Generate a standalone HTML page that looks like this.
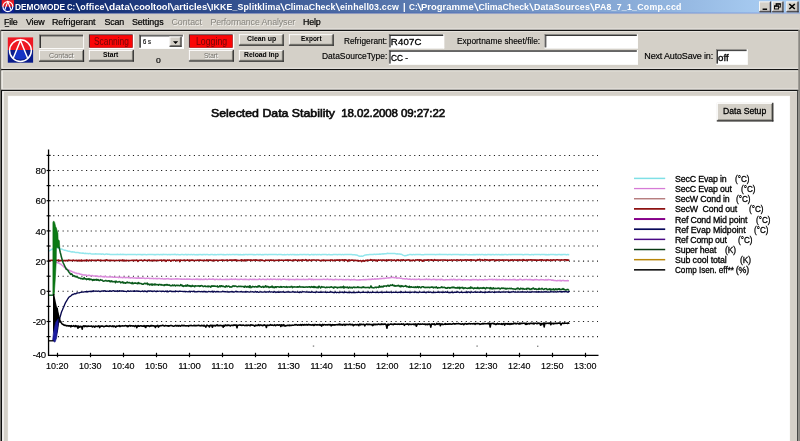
<!DOCTYPE html>
<html><head><meta charset="utf-8"><title>ClimaCheck</title>
<style>
html,body{margin:0;padding:0;}
body{width:800px;height:441px;overflow:hidden;background:#d4d0c8;position:relative;font-family:"Liberation Sans",sans-serif;}
.abs{position:absolute;}
.t{position:absolute;white-space:pre;display:block;}
#txt{position:absolute;left:0;top:0;width:800px;height:441px;will-change:transform;}
</style></head><body>
<svg class="abs" style="left:0;top:0" width="800" height="441" viewBox="0 0 800 441">
<defs><linearGradient id="tg" x1="0" y1="0" x2="1" y2="0">
<stop offset="0" stop-color="#0a246a"/><stop offset="0.07" stop-color="#0d286e"/><stop offset="0.95" stop-color="#a6caf0"/><stop offset="1" stop-color="#a8ccf2"/>
</linearGradient></defs>
<rect x="0.00" y="0.00" width="800.00" height="441.00" fill="#d4d0c8"/>
<rect x="0" y="0" width="800" height="13.5" fill="url(#tg)"/>
<rect x="0.00" y="12.60" width="800.00" height="0.90" fill="#2a46c0" opacity="0.35"/>
<rect x="0.00" y="13.50" width="800.00" height="0.60" fill="#b8b8d0" opacity="0.5"/>
<rect x="759.20" y="1.50" width="11.90" height="10.80" fill="#d4d0c8"/>
<rect x="759.20" y="1.50" width="11.90" height="0.81" fill="#ffffff"/>
<rect x="759.20" y="1.50" width="0.81" height="10.80" fill="#ffffff"/>
<rect x="759.97" y="10.60" width="10.28" height="0.85" fill="#8a8890"/>
<rect x="769.40" y="2.27" width="0.85" height="9.19" fill="#8a8890"/>
<rect x="759.20" y="11.32" width="11.90" height="0.98" fill="#26262e"/>
<rect x="770.12" y="1.50" width="0.98" height="10.80" fill="#26262e"/>
<rect x="771.90" y="1.50" width="11.60" height="10.80" fill="#d4d0c8"/>
<rect x="771.90" y="1.50" width="11.60" height="0.81" fill="#ffffff"/>
<rect x="771.90" y="1.50" width="0.81" height="10.80" fill="#ffffff"/>
<rect x="772.66" y="10.60" width="9.99" height="0.85" fill="#8a8890"/>
<rect x="781.80" y="2.27" width="0.85" height="9.19" fill="#8a8890"/>
<rect x="771.90" y="11.32" width="11.60" height="0.98" fill="#26262e"/>
<rect x="782.52" y="1.50" width="0.98" height="10.80" fill="#26262e"/>
<rect x="786.40" y="1.50" width="12.20" height="10.80" fill="#d4d0c8"/>
<rect x="786.40" y="1.50" width="12.20" height="0.81" fill="#ffffff"/>
<rect x="786.40" y="1.50" width="0.81" height="10.80" fill="#ffffff"/>
<rect x="787.16" y="10.60" width="10.59" height="0.85" fill="#8a8890"/>
<rect x="796.90" y="2.27" width="0.85" height="9.19" fill="#8a8890"/>
<rect x="786.40" y="11.32" width="12.20" height="0.98" fill="#26262e"/>
<rect x="797.62" y="1.50" width="0.98" height="10.80" fill="#26262e"/>
<rect x="762.6" y="8.5" width="4.5" height="1.45" fill="#000"/>
<rect x="776.2" y="3.9" width="4.1" height="3.2" fill="none" stroke="#000" stroke-width="0.9"/><rect x="775.75" y="3.4" width="5" height="1.2" fill="#000"/>
<rect x="774.5" y="6.0" width="4.1" height="3.0" fill="#d4d0c8" stroke="#000" stroke-width="0.9"/><rect x="774.05" y="5.5" width="5" height="1.2" fill="#000"/>
<path d="M789.3 4.0 L794.8 9.0 M794.8 4.0 L789.3 9.0" stroke="#000" stroke-width="1.55" fill="none"/>
<rect x="0.00" y="28.65" width="799.00" height="0.90" fill="#f3f1ed"/>
<rect x="1.00" y="29.75" width="797.70" height="1.30" fill="#141414"/>
<rect x="2.40" y="31.25" width="795.60" height="0.80" fill="#efede8"/>
<rect x="0.00" y="67.85" width="799.00" height="0.90" fill="#f3f1ed"/>
<rect x="0.80" y="68.95" width="797.90" height="1.30" fill="#141414"/>
<rect x="2.40" y="70.45" width="795.60" height="0.80" fill="#efede8"/>
<rect x="0.00" y="88.65" width="799.00" height="0.90" fill="#f3f1ed"/>
<rect x="0.80" y="89.75" width="797.90" height="1.30" fill="#141414"/>
<rect x="2.40" y="91.25" width="795.60" height="0.80" fill="#efede8"/>
<rect x="0.00" y="29.80" width="1.25" height="411.20" fill="#74726c"/>
<rect x="1.50" y="31.20" width="1.20" height="36.60" fill="#f6f4f0"/>
<rect x="1.50" y="70.60" width="1.20" height="18.20" fill="#f6f4f0"/>
<rect x="1.00" y="90.40" width="1.10" height="350.60" fill="#0c0c0c"/>
<rect x="2.25" y="91.40" width="1.45" height="349.60" fill="#fbfaf8"/>
<rect x="797.00" y="90.40" width="1.30" height="350.60" fill="#484846"/>
<rect x="798.30" y="29.80" width="1.70" height="411.20" fill="#8a8882"/>
<rect x="789.80" y="92.20" width="7.20" height="348.80" fill="#d6d0c8"/>
<rect x="7.70" y="95.70" width="782.40" height="345.30" fill="#ebe8e2"/>
<rect x="8.10" y="96.10" width="781.70" height="344.90" fill="#ffffff"/>
<g transform="translate(7.8,37.4)">
<rect x="0" y="0" width="25.3" height="12.6" fill="#ee1822"/>
<rect x="0" y="12.6" width="25.3" height="12.7" fill="#0a1c8a"/>
<path d="M8.8 12.6 L16.5 12.6 L19.4 19.8 Q12.7 24.2 5.9 19.8 Z" fill="#1432c4"/>
<circle cx="12.65" cy="13.2" r="10.9" fill="none" stroke="#fff" stroke-width="1.45"/>
<path d="M5.5 20.6 L12.65 3.0 L19.8 20.6" fill="none" stroke="#fff" stroke-width="1.45" stroke-linejoin="miter"/>
</g>
<g transform="translate(1.7,0.1) scale(0.486,0.494)">
<rect x="0" y="0" width="25.3" height="13.6" fill="#e81a24"/>
<rect x="0" y="13.6" width="25.3" height="11.7" fill="#0c1e90"/>
<circle cx="12.65" cy="13.2" r="10.2" fill="none" stroke="#fff" stroke-width="2.3"/>
<path d="M6.4 19.6 L12.65 3.2 L18.9 19.6" fill="none" stroke="#fff" stroke-width="2.2"/>
</g>
<path d="M76.15 3.3 L79.65 11.0" stroke="#fff" stroke-width="1.25" fill="none"/>
<path d="M104.90 3.3 L108.40 11.0" stroke="#fff" stroke-width="1.25" fill="none"/>
<path d="M130.00 3.3 L133.50 11.0" stroke="#fff" stroke-width="1.25" fill="none"/>
<path d="M170.25 3.3 L173.75 11.0" stroke="#fff" stroke-width="1.25" fill="none"/>
<path d="M207.25 3.3 L210.75 11.0" stroke="#fff" stroke-width="1.25" fill="none"/>
<path d="M280.75 3.3 L284.25 11.0" stroke="#fff" stroke-width="1.25" fill="none"/>
<path d="M336.00 3.3 L339.50 11.0" stroke="#fff" stroke-width="1.25" fill="none"/>
<path d="M417.75 3.3 L421.25 11.0" stroke="#fff" stroke-width="1.25" fill="none"/>
<path d="M474.50 3.3 L478.00 11.0" stroke="#fff" stroke-width="1.25" fill="none"/>
<path d="M529.75 3.3 L533.25 11.0" stroke="#fff" stroke-width="1.25" fill="none"/>
<path d="M590.55 3.3 L594.05 11.0" stroke="#fff" stroke-width="1.25" fill="none"/>
<rect x="39.30" y="34.60" width="44.80" height="14.40" fill="#d4d0c8"/>
<rect x="39.30" y="48.00" width="44.80" height="1.00" fill="#fbfaf8"/>
<rect x="83.10" y="34.60" width="1.00" height="14.40" fill="#fbfaf8"/>
<rect x="39.30" y="34.60" width="43.80" height="0.80" fill="#605e5a"/>
<rect x="39.30" y="34.60" width="0.80" height="13.40" fill="#605e5a"/>
<rect x="40.10" y="35.40" width="43.00" height="0.90" fill="#242424"/>
<rect x="40.10" y="35.40" width="0.90" height="12.60" fill="#242424"/>
<rect x="39.00" y="49.80" width="45.10" height="12.00" fill="#d4d0c8"/>
<rect x="39.00" y="49.80" width="45.10" height="0.95" fill="#ffffff"/>
<rect x="39.00" y="49.80" width="0.95" height="12.00" fill="#ffffff"/>
<rect x="39.90" y="59.80" width="43.20" height="1.00" fill="#8c8a82"/>
<rect x="82.10" y="50.70" width="1.00" height="10.10" fill="#8c8a82"/>
<rect x="39.00" y="60.65" width="45.10" height="1.15" fill="#2e2e2e"/>
<rect x="82.95" y="49.80" width="1.15" height="12.00" fill="#2e2e2e"/>
<rect x="88.90" y="34.30" width="45.30" height="14.80" fill="#ffffff"/>
<rect x="88.90" y="34.30" width="43.80" height="13.40" fill="#4a2a30"/>
<rect x="89.90" y="35.20" width="42.60" height="12.40" fill="#fb0606"/>
<rect x="88.90" y="49.90" width="45.00" height="11.70" fill="#d4d0c8"/>
<rect x="88.90" y="49.90" width="45.00" height="0.95" fill="#ffffff"/>
<rect x="88.90" y="49.90" width="0.95" height="11.70" fill="#ffffff"/>
<rect x="89.80" y="59.60" width="43.10" height="1.00" fill="#8c8a82"/>
<rect x="131.90" y="50.80" width="1.00" height="9.80" fill="#8c8a82"/>
<rect x="88.90" y="60.45" width="45.00" height="1.15" fill="#2e2e2e"/>
<rect x="132.75" y="49.90" width="1.15" height="11.70" fill="#2e2e2e"/>
<rect x="139.10" y="34.70" width="44.80" height="14.00" fill="#ffffff"/>
<rect x="139.10" y="47.70" width="44.80" height="1.00" fill="#ffffff"/>
<rect x="182.90" y="34.70" width="1.00" height="14.00" fill="#ffffff"/>
<rect x="139.10" y="34.70" width="43.80" height="0.80" fill="#605e5a"/>
<rect x="139.10" y="34.70" width="0.80" height="13.00" fill="#605e5a"/>
<rect x="139.90" y="35.50" width="43.00" height="0.90" fill="#242424"/>
<rect x="139.90" y="35.50" width="0.90" height="12.20" fill="#242424"/>
<rect x="169.50" y="36.60" width="12.10" height="10.20" fill="#d4d0c8"/>
<rect x="169.50" y="36.60" width="12.10" height="0.85" fill="#ffffff"/>
<rect x="169.50" y="36.60" width="0.85" height="10.20" fill="#ffffff"/>
<rect x="170.31" y="45.00" width="10.39" height="0.90" fill="#8c8a82"/>
<rect x="179.80" y="37.41" width="0.90" height="8.49" fill="#8c8a82"/>
<rect x="169.50" y="45.77" width="12.10" height="1.03" fill="#2e2e2e"/>
<rect x="180.56" y="36.60" width="1.03" height="10.20" fill="#2e2e2e"/>
<path d="M173.0 41.3 L178.2 41.3 L175.6 44.0 Z" fill="#000"/>
<rect x="188.90" y="34.30" width="45.30" height="14.80" fill="#ffffff"/>
<rect x="188.90" y="34.30" width="43.80" height="13.40" fill="#4a2a30"/>
<rect x="189.90" y="35.20" width="42.60" height="12.40" fill="#fb0606"/>
<rect x="188.90" y="49.90" width="45.00" height="11.70" fill="#d4d0c8"/>
<rect x="188.90" y="49.90" width="45.00" height="0.95" fill="#ffffff"/>
<rect x="188.90" y="49.90" width="0.95" height="11.70" fill="#ffffff"/>
<rect x="189.80" y="59.60" width="43.10" height="1.00" fill="#8c8a82"/>
<rect x="231.90" y="50.80" width="1.00" height="9.80" fill="#8c8a82"/>
<rect x="188.90" y="60.45" width="45.00" height="1.15" fill="#2e2e2e"/>
<rect x="232.75" y="49.90" width="1.15" height="11.70" fill="#2e2e2e"/>
<rect x="238.90" y="34.20" width="44.90" height="11.60" fill="#d4d0c8"/>
<rect x="238.90" y="34.20" width="44.90" height="0.95" fill="#ffffff"/>
<rect x="238.90" y="34.20" width="0.95" height="11.60" fill="#ffffff"/>
<rect x="239.80" y="43.80" width="43.00" height="1.00" fill="#8c8a82"/>
<rect x="281.80" y="35.10" width="1.00" height="9.70" fill="#8c8a82"/>
<rect x="238.90" y="44.65" width="44.90" height="1.15" fill="#2e2e2e"/>
<rect x="282.65" y="34.20" width="1.15" height="11.60" fill="#2e2e2e"/>
<rect x="238.90" y="50.10" width="44.90" height="11.70" fill="#d4d0c8"/>
<rect x="238.90" y="50.10" width="44.90" height="0.95" fill="#ffffff"/>
<rect x="238.90" y="50.10" width="0.95" height="11.70" fill="#ffffff"/>
<rect x="239.80" y="59.80" width="43.00" height="1.00" fill="#8c8a82"/>
<rect x="281.80" y="51.00" width="1.00" height="9.80" fill="#8c8a82"/>
<rect x="238.90" y="60.65" width="44.90" height="1.15" fill="#2e2e2e"/>
<rect x="282.65" y="50.10" width="1.15" height="11.70" fill="#2e2e2e"/>
<rect x="288.90" y="34.20" width="44.90" height="11.60" fill="#d4d0c8"/>
<rect x="288.90" y="34.20" width="44.90" height="0.95" fill="#ffffff"/>
<rect x="288.90" y="34.20" width="0.95" height="11.60" fill="#ffffff"/>
<rect x="289.80" y="43.80" width="43.00" height="1.00" fill="#8c8a82"/>
<rect x="331.80" y="35.10" width="1.00" height="9.70" fill="#8c8a82"/>
<rect x="288.90" y="44.65" width="44.90" height="1.15" fill="#2e2e2e"/>
<rect x="332.65" y="34.20" width="1.15" height="11.60" fill="#2e2e2e"/>
<rect x="388.90" y="34.30" width="55.30" height="14.10" fill="#ffffff"/>
<rect x="388.90" y="47.40" width="55.30" height="1.00" fill="#ffffff"/>
<rect x="443.20" y="34.30" width="1.00" height="14.10" fill="#ffffff"/>
<rect x="388.90" y="34.30" width="54.30" height="0.80" fill="#605e5a"/>
<rect x="388.90" y="34.30" width="0.80" height="13.10" fill="#605e5a"/>
<rect x="389.70" y="35.10" width="53.50" height="0.90" fill="#242424"/>
<rect x="389.70" y="35.10" width="0.90" height="12.30" fill="#242424"/>
<rect x="388.90" y="50.00" width="248.90" height="14.60" fill="#ffffff"/>
<rect x="388.90" y="63.60" width="248.90" height="1.00" fill="#ffffff"/>
<rect x="636.80" y="50.00" width="1.00" height="14.60" fill="#ffffff"/>
<rect x="388.90" y="50.00" width="247.90" height="0.80" fill="#605e5a"/>
<rect x="388.90" y="50.00" width="0.80" height="13.60" fill="#605e5a"/>
<rect x="389.70" y="50.80" width="247.10" height="0.90" fill="#242424"/>
<rect x="389.70" y="50.80" width="0.90" height="12.80" fill="#242424"/>
<rect x="544.60" y="34.30" width="93.20" height="14.10" fill="#ffffff"/>
<rect x="544.60" y="47.40" width="93.20" height="1.00" fill="#ffffff"/>
<rect x="636.80" y="34.30" width="1.00" height="14.10" fill="#ffffff"/>
<rect x="544.60" y="34.30" width="92.20" height="0.80" fill="#605e5a"/>
<rect x="544.60" y="34.30" width="0.80" height="13.10" fill="#605e5a"/>
<rect x="545.40" y="35.10" width="91.40" height="0.90" fill="#242424"/>
<rect x="545.40" y="35.10" width="0.90" height="12.30" fill="#242424"/>
<rect x="716.30" y="49.40" width="31.30" height="15.20" fill="#ffffff"/>
<rect x="716.30" y="63.60" width="31.30" height="1.00" fill="#ffffff"/>
<rect x="746.60" y="49.40" width="1.00" height="15.20" fill="#ffffff"/>
<rect x="716.30" y="49.40" width="30.30" height="0.80" fill="#605e5a"/>
<rect x="716.30" y="49.40" width="0.80" height="14.20" fill="#605e5a"/>
<rect x="717.10" y="50.20" width="29.50" height="0.90" fill="#242424"/>
<rect x="717.10" y="50.20" width="0.90" height="13.40" fill="#242424"/>
<rect x="716.80" y="102.80" width="56.60" height="18.70" fill="#d4d0c8"/>
<rect x="716.80" y="102.80" width="56.60" height="1.05" fill="#ffffff"/>
<rect x="716.80" y="102.80" width="1.04" height="18.70" fill="#ffffff"/>
<rect x="717.79" y="119.30" width="54.51" height="1.10" fill="#8c8a82"/>
<rect x="771.20" y="103.79" width="1.10" height="16.61" fill="#8c8a82"/>
<rect x="716.80" y="120.23" width="56.60" height="1.27" fill="#2e2e2e"/>
<rect x="772.13" y="102.80" width="1.26" height="18.70" fill="#2e2e2e"/>
<rect x="4.80" y="26.10" width="4.40" height="0.90" fill="#222"/>
<g stroke="#1c1c1c" stroke-width="1.05" stroke-dasharray="1.15 3.538" fill="none"><line x1="53.2" y1="336.60" x2="598" y2="336.60"/><line x1="53.2" y1="321.50" x2="598" y2="321.50"/><line x1="53.2" y1="306.40" x2="598" y2="306.40"/><line x1="53.2" y1="291.30" x2="598" y2="291.30"/><line x1="53.2" y1="276.20" x2="598" y2="276.20"/><line x1="53.2" y1="261.10" x2="598" y2="261.10"/><line x1="53.2" y1="246.00" x2="598" y2="246.00"/><line x1="53.2" y1="230.90" x2="598" y2="230.90"/><line x1="53.2" y1="215.80" x2="598" y2="215.80"/><line x1="53.2" y1="200.70" x2="598" y2="200.70"/><line x1="53.2" y1="185.60" x2="598" y2="185.60"/><line x1="53.2" y1="170.50" x2="598" y2="170.50"/><line x1="53.2" y1="155.40" x2="598" y2="155.40"/></g>
<path d="M48.5 251.2 L49.3 250.8 L50.1 250.3 L50.9 249.9 L51.7 249.4 L52.5 249.0 L53.3 248.7 L54.1 248.2 L54.9 247.8 L55.7 247.3 L56.5 247.3 L57.3 247.6 L58.1 247.8 L58.9 248.3 L59.7 248.6 L60.5 248.9 L61.3 249.0 L62.1 249.2 L62.9 249.6 L63.7 249.9 L64.5 250.2 L65.3 250.3 L66.1 250.6 L66.9 250.7 L67.7 251.0 L68.5 251.2 L69.3 251.2 L70.1 251.6 L70.9 251.7 L71.7 251.9 L72.5 251.8 L73.3 251.9 L74.1 252.1 L74.9 252.3 L75.7 252.4 L76.5 252.5 L77.3 252.5 L78.1 252.6 L78.9 252.7 L79.7 253.0 L80.5 252.9 L81.3 253.1 L82.1 253.2 L82.9 253.0 L83.7 253.3 L84.5 253.5 L85.3 253.2 L86.1 253.4 L86.9 253.5 L87.7 253.5 L88.5 253.7 L89.3 253.6 L90.1 253.6 L90.9 253.8 L91.7 253.9 L92.5 253.9 L93.3 254.0 L94.1 253.9 L94.9 253.9 L95.7 253.8 L96.5 254.1 L97.3 254.0 L98.1 254.0 L98.9 254.0 L99.7 254.0 L100.5 254.1 L101.3 254.3 L102.1 254.0 L102.9 254.0 L103.7 254.2 L104.5 254.4 L105.3 254.3 L106.1 254.1 L106.9 254.0 L107.7 254.3 L108.5 254.2 L109.3 254.2 L110.1 254.4 L110.9 254.5 L111.7 254.4 L112.5 254.4 L113.3 254.4 L114.1 254.6 L114.9 254.5 L115.7 254.5 L116.5 254.5 L117.3 254.3 L118.1 254.6 L118.9 254.5 L119.7 254.5 L120.5 254.3 L121.3 254.4 L122.1 254.6 L122.9 254.3 L123.7 254.5 L124.5 254.6 L125.3 254.4 L126.1 254.7 L126.9 254.6 L127.7 254.5 L128.5 254.6 L129.3 254.6 L130.1 254.5 L130.9 254.6 L131.7 254.5 L132.5 254.5 L133.3 254.6 L134.1 254.5 L134.9 254.5 L135.7 254.6 L136.5 254.7 L137.3 254.5 L138.1 254.4 L138.9 254.5 L139.7 254.5 L140.5 254.5 L141.3 254.7 L142.1 254.5 L142.9 254.7 L143.7 254.4 L144.5 254.5 L145.3 254.6 L146.1 254.7 L146.9 254.7 L147.7 254.6 L148.5 254.6 L149.3 254.6 L150.1 254.6 L150.9 254.6 L151.7 254.6 L152.5 254.6 L153.3 254.6 L154.1 254.7 L154.9 254.6 L155.7 254.8 L156.5 254.6 L157.3 254.5 L158.1 254.5 L158.9 254.6 L159.7 254.7 L160.5 254.6 L161.3 254.6 L162.1 254.8 L162.9 254.3 L163.7 254.5 L164.5 254.6 L165.3 254.6 L166.1 254.6 L166.9 254.5 L167.7 254.7 L168.5 254.6 L169.3 254.5 L170.1 254.8 L170.9 254.6 L171.7 254.5 L172.5 254.6 L173.3 254.6 L174.1 254.6 L174.9 254.3 L175.7 254.5 L176.5 254.7 L177.3 254.5 L178.1 254.6 L178.9 254.7 L179.7 254.7 L180.5 254.7 L181.3 254.4 L182.1 254.6 L182.9 254.6 L183.7 254.7 L184.5 254.7 L185.3 254.3 L186.1 254.7 L186.9 254.5 L187.7 254.7 L188.5 254.4 L189.3 254.6 L190.1 254.7 L190.9 254.6 L191.7 254.6 L192.5 254.7 L193.3 254.6 L194.1 254.6 L194.9 254.8 L195.7 254.7 L196.5 254.6 L197.3 254.9 L198.1 254.5 L198.9 254.7 L199.7 254.6 L200.5 254.6 L201.3 254.7 L202.1 254.6 L202.9 254.7 L203.7 254.4 L204.5 254.4 L205.3 254.7 L206.1 254.5 L206.9 254.5 L207.7 254.5 L208.5 254.7 L209.3 254.7 L210.1 254.7 L210.9 254.5 L211.7 254.6 L212.5 254.5 L213.3 254.7 L214.1 254.8 L214.9 254.5 L215.7 254.8 L216.5 254.7 L217.3 254.6 L218.1 254.4 L218.9 254.7 L219.7 254.6 L220.5 254.5 L221.3 254.6 L222.1 254.6 L222.9 254.7 L223.7 254.5 L224.5 254.7 L225.3 254.7 L226.1 254.7 L226.9 254.6 L227.7 254.5 L228.5 254.7 L229.3 254.6 L230.1 254.6 L230.9 254.7 L231.7 254.6 L232.5 254.4 L233.3 254.6 L234.1 254.4 L234.9 254.7 L235.7 254.6 L236.5 254.5 L237.3 254.6 L238.1 254.7 L238.9 254.6 L239.7 254.7 L240.5 254.6 L241.3 254.7 L242.1 254.7 L242.9 254.8 L243.7 254.5 L244.5 254.7 L245.3 254.4 L246.1 254.5 L246.9 254.4 L247.7 254.7 L248.5 254.5 L249.3 254.6 L250.1 254.6 L250.9 254.6 L251.7 254.5 L252.5 254.6 L253.3 254.8 L254.1 254.6 L254.9 254.7 L255.7 254.7 L256.5 254.6 L257.3 254.5 L258.1 254.5 L258.9 254.7 L259.7 254.4 L260.5 254.5 L261.3 254.7 L262.1 254.7 L262.9 254.6 L263.7 254.7 L264.5 254.6 L265.3 254.5 L266.1 254.4 L266.9 254.5 L267.7 254.7 L268.5 254.5 L269.3 254.5 L270.1 254.5 L270.9 254.4 L271.7 254.6 L272.5 254.5 L273.3 254.6 L274.1 254.4 L274.9 254.6 L275.7 254.5 L276.5 254.4 L277.3 254.7 L278.1 254.6 L278.9 254.4 L279.7 254.5 L280.5 254.6 L281.3 254.6 L282.1 254.7 L282.9 254.7 L283.7 254.7 L284.5 254.6 L285.3 254.7 L286.1 254.7 L286.9 254.6 L287.7 254.4 L288.5 254.7 L289.3 254.7 L290.1 254.6 L290.9 254.6 L291.7 254.8 L292.5 254.4 L293.3 254.6 L294.1 254.8 L294.9 254.5 L295.7 254.7 L296.5 254.8 L297.3 254.6 L298.1 254.7 L298.9 254.7 L299.7 254.5 L300.5 254.6 L301.3 254.6 L302.1 254.7 L302.9 254.6 L303.7 254.6 L304.5 254.5 L305.3 254.6 L306.1 254.7 L306.9 254.6 L307.7 254.5 L308.5 254.5 L309.3 254.9 L310.1 254.7 L310.9 254.7 L311.7 254.3 L312.5 254.7 L313.3 254.6 L314.1 254.8 L314.9 254.6 L315.7 254.6 L316.5 254.7 L317.3 254.4 L318.1 254.7 L318.9 254.6 L319.7 254.5 L320.5 254.7 L321.3 254.8 L322.1 254.5 L322.9 254.5 L323.7 254.6 L324.5 254.6 L325.3 254.6 L326.1 254.5 L326.9 254.8 L327.7 254.7 L328.5 254.5 L329.3 254.5 L330.1 254.8 L330.9 254.7 L331.7 254.8 L332.5 254.7 L333.3 254.5 L334.1 254.6 L334.9 254.4 L335.7 254.5 L336.5 254.6 L337.3 254.7 L338.1 254.5 L338.9 254.6 L339.7 254.6 L340.5 254.6 L341.3 254.7 L342.1 254.6 L342.9 254.6 L343.7 254.7 L344.5 254.6 L345.3 254.5 L346.1 254.5 L346.9 254.6 L347.7 254.6 L348.5 254.6 L349.3 254.6 L350.1 254.6 L350.9 254.6 L351.7 254.5 L352.5 254.7 L353.3 254.7 L354.1 254.7 L354.9 254.8 L355.7 255.0 L356.5 255.0 L357.3 255.2 L358.1 255.7 L358.9 255.9 L359.7 256.3 L360.5 256.3 L361.3 256.1 L362.1 256.2 L362.9 256.2 L363.7 255.7 L364.5 255.3 L365.3 255.1 L366.1 255.0 L366.9 254.8 L367.7 254.7 L368.5 254.7 L369.3 254.6 L370.1 254.5 L370.9 254.5 L371.7 254.6 L372.5 254.5 L373.3 254.5 L374.1 254.3 L374.9 254.3 L375.7 254.4 L376.5 254.2 L377.3 254.3 L378.1 254.2 L378.9 254.2 L379.7 254.0 L380.5 254.3 L381.3 254.1 L382.1 253.9 L382.9 253.8 L383.7 254.0 L384.5 253.7 L385.3 253.7 L386.1 253.7 L386.9 253.5 L387.7 253.3 L388.5 253.4 L389.3 253.4 L390.1 253.5 L390.9 253.4 L391.7 253.4 L392.5 253.5 L393.3 253.5 L394.1 253.5 L394.9 253.6 L395.7 253.7 L396.5 253.9 L397.3 253.8 L398.1 253.9 L398.9 254.1 L399.7 254.0 L400.5 254.3 L401.3 254.3 L402.1 254.6 L402.9 255.1 L403.7 255.4 L404.5 255.7 L405.3 255.7 L406.1 255.4 L406.9 255.4 L407.7 255.0 L408.5 254.9 L409.3 254.6 L410.1 254.6 L410.9 254.4 L411.7 254.7 L412.5 254.7 L413.3 254.4 L414.1 254.6 L414.9 254.7 L415.7 254.4 L416.5 254.4 L417.3 254.5 L418.1 254.5 L418.9 254.5 L419.7 254.6 L420.5 254.6 L421.3 254.7 L422.1 254.7 L422.9 254.8 L423.7 254.7 L424.5 254.5 L425.3 254.5 L426.1 254.5 L426.9 254.5 L427.7 254.6 L428.5 254.6 L429.3 254.6 L430.1 254.4 L430.9 254.5 L431.7 254.6 L432.5 254.6 L433.3 254.6 L434.1 254.6 L434.9 254.5 L435.7 254.7 L436.5 254.6 L437.3 254.6 L438.1 254.5 L438.9 254.6 L439.7 254.3 L440.5 254.5 L441.3 254.6 L442.1 254.4 L442.9 254.6 L443.7 254.6 L444.5 254.5 L445.3 254.6 L446.1 254.6 L446.9 254.6 L447.7 254.7 L448.5 254.6 L449.3 254.5 L450.1 254.6 L450.9 254.6 L451.7 254.7 L452.5 254.6 L453.3 254.5 L454.1 254.5 L454.9 254.6 L455.7 254.5 L456.5 254.5 L457.3 254.6 L458.1 254.6 L458.9 254.6 L459.7 254.7 L460.5 254.6 L461.3 254.8 L462.1 254.6 L462.9 254.7 L463.7 254.6 L464.5 254.7 L465.3 254.4 L466.1 254.5 L466.9 254.6 L467.7 254.7 L468.5 254.8 L469.3 254.6 L470.1 254.7 L470.9 254.7 L471.7 254.7 L472.5 254.7 L473.3 254.6 L474.1 254.7 L474.9 254.5 L475.7 254.7 L476.5 254.5 L477.3 254.6 L478.1 254.8 L478.9 254.6 L479.7 254.6 L480.5 254.7 L481.3 254.6 L482.1 254.5 L482.9 254.6 L483.7 254.7 L484.5 254.7 L485.3 254.5 L486.1 254.8 L486.9 254.8 L487.7 254.6 L488.5 254.6 L489.3 254.6 L490.1 254.7 L490.9 254.5 L491.7 254.7 L492.5 254.6 L493.3 254.5 L494.1 254.7 L494.9 254.7 L495.7 254.6 L496.5 254.5 L497.3 254.7 L498.1 254.6 L498.9 254.6 L499.7 254.8 L500.5 254.7 L501.3 254.5 L502.1 254.8 L502.9 254.6 L503.7 254.7 L504.5 254.5 L505.3 254.6 L506.1 254.4 L506.9 254.8 L507.7 254.7 L508.5 254.5 L509.3 254.4 L510.1 254.4 L510.9 254.7 L511.7 254.6 L512.5 254.6 L513.3 254.6 L514.1 254.6 L514.9 254.5 L515.7 254.6 L516.5 254.5 L517.3 254.6 L518.1 254.6 L518.9 254.6 L519.7 254.6 L520.5 254.5 L521.3 254.6 L522.1 254.6 L522.9 254.8 L523.7 254.7 L524.5 254.6 L525.3 254.6 L526.1 254.5 L526.9 254.5 L527.7 254.6 L528.5 254.6 L529.3 254.7 L530.1 254.7 L530.9 254.8 L531.7 254.5 L532.5 254.6 L533.3 254.9 L534.1 254.4 L534.9 254.5 L535.7 254.6 L536.5 254.6 L537.3 254.6 L538.1 254.6 L538.9 254.6 L539.7 254.6 L540.5 254.7 L541.3 254.4 L542.1 254.5 L542.9 254.6 L543.7 254.5 L544.5 254.5 L545.3 254.7 L546.1 254.5 L546.9 254.7 L547.7 254.7 L548.5 254.6 L549.3 254.7 L550.1 254.6 L550.9 254.5 L551.7 254.6 L552.5 254.6 L553.3 254.5 L554.1 254.6 L554.9 254.7 L555.7 254.5 L556.5 254.7 L557.3 254.8 L558.1 254.5 L558.9 254.6 L559.7 254.6 L560.5 254.8 L561.3 254.6 L562.1 254.7 L562.9 254.5 L563.7 254.6 L564.5 254.6 L565.3 254.4 L566.1 254.7 L566.9 254.7 L567.7 254.4 L568.5 254.7 L569.3 254.6" fill="none" stroke="#92e6ec" stroke-width="1.50" stroke-linejoin="round"/>
<path d="M49.0 260.5 L49.6 260.5 L50.2 260.7 L50.8 260.3 L51.4 260.3 L52.0 260.4 L52.6 260.2 L53.2 260.4 L53.8 260.5 L54.4 260.4 L55.0 260.3 L55.6 260.2 L56.2 260.3 L56.8 260.6 L57.4 260.4 L58.0 260.1 L58.6 260.0 L59.2 260.4 L59.8 261.0 L60.4 260.6 L61.0 260.4 L61.6 260.4 L62.2 260.7 L62.8 260.6 L63.4 260.4 L64.0 260.5 L64.6 260.8 L65.2 260.5 L65.8 260.9 L66.4 260.4 L67.0 260.5 L67.6 260.6 L68.2 260.3 L68.8 260.1 L69.4 260.5 L70.0 260.3 L70.6 260.5 L71.2 260.5 L71.8 260.4 L72.4 260.6 L73.0 260.1 L73.6 260.3 L74.2 260.5 L74.8 260.7 L75.4 260.4 L76.0 260.6 L76.6 260.3 L77.2 260.6 L77.8 260.5 L78.4 260.3 L79.0 261.1 L79.6 260.2 L80.2 260.4 L80.8 261.0 L81.4 260.0 L82.0 260.8 L82.6 260.4 L83.2 260.4 L83.8 260.7 L84.4 260.3 L85.0 260.9 L85.6 260.3 L86.2 260.2 L86.8 259.9 L87.4 260.4 L88.0 260.4 L88.6 260.9 L89.2 260.2 L89.8 260.1 L90.4 260.5 L91.0 260.5 L91.6 260.0 L92.2 260.2 L92.8 260.2 L93.4 260.4 L94.0 260.3 L94.6 260.6 L95.2 260.2 L95.8 260.3 L96.4 260.5 L97.0 260.3 L97.6 260.0 L98.2 260.4 L98.8 260.1 L99.4 260.5 L100.0 260.5 L100.6 260.1 L101.2 260.3 L101.8 260.6 L102.4 260.4 L103.0 260.5 L103.6 260.6 L104.2 260.2 L104.8 260.6 L105.4 260.3 L106.0 260.0 L106.6 259.8 L107.2 260.5 L107.8 260.1 L108.4 260.5 L109.0 260.6 L109.6 260.3 L110.2 260.5 L110.8 260.2 L111.4 260.4 L112.0 260.3 L112.6 260.4 L113.2 260.6 L113.8 260.3 L114.4 260.6 L115.0 260.5 L115.6 260.4 L116.2 260.3 L116.8 260.5 L117.4 260.4 L118.0 260.4 L118.6 260.3 L119.2 260.3 L119.8 260.2 L120.4 260.4 L121.0 260.2 L121.6 260.6 L122.2 260.8 L122.8 259.8 L123.4 260.7 L124.0 260.5 L124.6 260.2 L125.2 260.5 L125.8 261.0 L126.4 260.2 L127.0 260.6 L127.6 260.5 L128.2 260.4 L128.8 260.5 L129.4 260.5 L130.0 260.5 L130.6 260.4 L131.2 260.4 L131.8 260.3 L132.4 260.3 L133.0 260.6 L133.6 260.2 L134.2 260.4 L134.8 260.2 L135.4 260.4 L136.0 260.2 L136.6 260.1 L137.2 260.3 L137.8 261.5 L138.4 260.4 L139.0 260.4 L139.6 260.2 L140.2 260.2 L140.8 260.2 L141.4 260.0 L142.0 260.5 L142.6 260.6 L143.2 260.4 L143.8 260.4 L144.4 259.9 L145.0 260.2 L145.6 260.3 L146.2 260.5 L146.8 260.6 L147.4 260.3 L148.0 260.4 L148.6 260.1 L149.2 259.9 L149.8 260.7 L150.4 260.7 L151.0 260.3 L151.6 260.6 L152.2 260.3 L152.8 260.5 L153.4 260.7 L154.0 260.1 L154.6 260.6 L155.2 260.3 L155.8 260.7 L156.4 260.4 L157.0 260.2 L157.6 260.3 L158.2 260.4 L158.8 260.6 L159.4 260.2 L160.0 260.3 L160.6 260.2 L161.2 260.0 L161.8 260.7 L162.4 260.4 L163.0 260.2 L163.6 260.0 L164.2 260.6 L164.8 260.1 L165.4 260.2 L166.0 261.4 L166.6 260.4 L167.2 260.2 L167.8 260.0 L168.4 260.5 L169.0 260.3 L169.6 260.1 L170.2 260.4 L170.8 261.2 L171.4 260.5 L172.0 260.3 L172.6 260.3 L173.2 260.6 L173.8 260.1 L174.4 260.1 L175.0 260.3 L175.6 260.4 L176.2 260.6 L176.8 260.0 L177.4 260.6 L178.0 260.3 L178.6 260.2 L179.2 260.1 L179.8 261.6 L180.4 260.1 L181.0 260.3 L181.6 260.3 L182.2 260.3 L182.8 260.4 L183.4 260.4 L184.0 260.0 L184.6 260.0 L185.2 260.3 L185.8 260.4 L186.4 260.3 L187.0 260.3 L187.6 259.9 L188.2 260.4 L188.8 260.7 L189.4 260.1 L190.0 260.6 L190.6 260.2 L191.2 260.1 L191.8 260.4 L192.4 260.0 L193.0 260.4 L193.6 260.3 L194.2 260.4 L194.8 260.6 L195.4 260.2 L196.0 260.2 L196.6 260.4 L197.2 260.2 L197.8 260.0 L198.4 260.5 L199.0 260.0 L199.6 260.2 L200.2 260.0 L200.8 260.2 L201.4 260.2 L202.0 260.4 L202.6 260.3 L203.2 260.4 L203.8 260.2 L204.4 260.0 L205.0 260.5 L205.6 260.4 L206.2 260.5 L206.8 259.9 L207.4 260.7 L208.0 260.0 L208.6 260.3 L209.2 260.3 L209.8 260.0 L210.4 260.0 L211.0 260.4 L211.6 260.3 L212.2 260.7 L212.8 260.3 L213.4 260.4 L214.0 260.0 L214.6 260.8 L215.2 260.2 L215.8 260.2 L216.4 260.3 L217.0 260.1 L217.6 260.4 L218.2 260.7 L218.8 260.3 L219.4 260.3 L220.0 260.3 L220.6 260.3 L221.2 260.3 L221.8 260.1 L222.4 260.3 L223.0 260.1 L223.6 260.3 L224.2 260.6 L224.8 260.2 L225.4 260.2 L226.0 260.3 L226.6 260.0 L227.2 259.9 L227.8 260.5 L228.4 260.4 L229.0 260.3 L229.6 260.0 L230.2 260.3 L230.8 260.0 L231.4 260.3 L232.0 260.1 L232.6 260.1 L233.2 260.4 L233.8 260.0 L234.4 259.9 L235.0 260.4 L235.6 259.8 L236.2 260.4 L236.8 260.1 L237.4 260.6 L238.0 260.3 L238.6 260.4 L239.2 260.4 L239.8 260.4 L240.4 260.2 L241.0 260.1 L241.6 259.8 L242.2 260.7 L242.8 260.1 L243.4 260.3 L244.0 260.9 L244.6 259.9 L245.2 260.5 L245.8 260.1 L246.4 260.1 L247.0 259.9 L247.6 260.4 L248.2 259.9 L248.8 260.1 L249.4 260.2 L250.0 259.8 L250.6 260.4 L251.2 260.0 L251.8 260.1 L252.4 260.5 L253.0 260.3 L253.6 259.9 L254.2 260.0 L254.8 260.3 L255.4 260.0 L256.0 259.8 L256.6 260.3 L257.2 260.0 L257.8 260.5 L258.4 260.3 L259.0 260.5 L259.6 260.1 L260.2 259.9 L260.8 260.1 L261.4 260.4 L262.0 260.0 L262.6 260.3 L263.2 260.6 L263.8 260.7 L264.4 260.7 L265.0 260.8 L265.6 260.0 L266.2 260.3 L266.8 260.2 L267.4 260.4 L268.0 260.1 L268.6 260.2 L269.2 260.3 L269.8 260.3 L270.4 260.1 L271.0 260.0 L271.6 260.4 L272.2 260.2 L272.8 260.3 L273.4 260.0 L274.0 260.5 L274.6 260.5 L275.2 260.2 L275.8 260.4 L276.4 260.2 L277.0 260.2 L277.6 260.2 L278.2 260.4 L278.8 260.0 L279.4 260.0 L280.0 260.3 L280.6 260.2 L281.2 260.2 L281.8 260.1 L282.4 260.2 L283.0 260.2 L283.6 260.2 L284.2 260.3 L284.8 260.2 L285.4 260.0 L286.0 260.2 L286.6 260.1 L287.2 260.3 L287.8 259.9 L288.4 260.3 L289.0 260.1 L289.6 260.2 L290.2 260.0 L290.8 260.2 L291.4 260.4 L292.0 260.4 L292.6 260.3 L293.2 259.9 L293.8 260.6 L294.4 260.0 L295.0 260.0 L295.6 259.8 L296.2 260.3 L296.8 260.2 L297.4 260.5 L298.0 260.3 L298.6 259.9 L299.2 260.7 L299.8 260.2 L300.4 260.2 L301.0 260.0 L301.6 260.6 L302.2 259.8 L302.8 260.1 L303.4 260.0 L304.0 260.3 L304.6 260.3 L305.2 260.0 L305.8 259.6 L306.4 260.2 L307.0 260.1 L307.6 260.4 L308.2 260.7 L308.8 260.1 L309.4 259.8 L310.0 260.2 L310.6 260.5 L311.2 260.0 L311.8 260.4 L312.4 260.0 L313.0 260.1 L313.6 259.9 L314.2 260.1 L314.8 260.0 L315.4 260.2 L316.0 260.2 L316.6 260.1 L317.2 260.0 L317.8 260.0 L318.4 260.1 L319.0 260.1 L319.6 260.4 L320.2 260.7 L320.8 260.5 L321.4 260.5 L322.0 260.1 L322.6 260.2 L323.2 260.8 L323.8 259.9 L324.4 260.4 L325.0 260.4 L325.6 260.2 L326.2 260.2 L326.8 260.3 L327.4 260.2 L328.0 260.5 L328.6 260.2 L329.2 260.2 L329.8 260.2 L330.4 260.4 L331.0 259.9 L331.6 260.1 L332.2 259.9 L332.8 260.7 L333.4 260.5 L334.0 260.2 L334.6 260.0 L335.2 260.5 L335.8 260.1 L336.4 260.2 L337.0 259.9 L337.6 260.3 L338.2 260.0 L338.8 260.4 L339.4 259.9 L340.0 260.4 L340.6 260.0 L341.2 260.1 L341.8 260.0 L342.4 259.8 L343.0 260.6 L343.6 260.1 L344.2 259.7 L344.8 260.4 L345.4 259.8 L346.0 259.9 L346.6 260.3 L347.2 260.2 L347.8 261.5 L348.4 260.4 L349.0 259.8 L349.6 260.1 L350.2 260.6 L350.8 260.3 L351.4 260.1 L352.0 260.2 L352.6 260.1 L353.2 260.2 L353.8 260.5 L354.4 260.3 L355.0 260.5 L355.6 260.3 L356.2 260.5 L356.8 260.5 L357.4 260.9 L358.0 260.4 L358.6 260.7 L359.2 260.8 L359.8 260.9 L360.4 260.6 L361.0 260.8 L361.6 261.6 L362.2 261.0 L362.8 260.5 L363.4 260.4 L364.0 261.1 L364.6 261.2 L365.2 260.6 L365.8 260.3 L366.4 260.3 L367.0 260.7 L367.6 260.1 L368.2 260.2 L368.8 260.3 L369.4 260.2 L370.0 260.2 L370.6 259.6 L371.2 260.3 L371.8 260.0 L372.4 260.0 L373.0 260.1 L373.6 260.4 L374.2 260.0 L374.8 259.9 L375.4 260.8 L376.0 260.0 L376.6 260.3 L377.2 261.1 L377.8 260.2 L378.4 259.8 L379.0 260.3 L379.6 260.2 L380.2 260.1 L380.8 260.0 L381.4 260.3 L382.0 260.3 L382.6 260.0 L383.2 260.1 L383.8 260.1 L384.4 260.1 L385.0 260.6 L385.6 260.2 L386.2 260.4 L386.8 259.8 L387.4 260.5 L388.0 260.4 L388.6 259.9 L389.2 260.2 L389.8 260.0 L390.4 260.0 L391.0 260.1 L391.6 259.9 L392.2 260.1 L392.8 260.4 L393.4 260.2 L394.0 260.0 L394.6 259.9 L395.2 260.6 L395.8 260.6 L396.4 260.3 L397.0 259.9 L397.6 260.1 L398.2 259.7 L398.8 260.6 L399.4 260.3 L400.0 260.2 L400.6 260.1 L401.2 260.1 L401.8 259.9 L402.4 260.5 L403.0 260.1 L403.6 259.7 L404.2 260.3 L404.8 260.2 L405.4 260.2 L406.0 260.1 L406.6 260.2 L407.2 259.9 L407.8 260.1 L408.4 260.0 L409.0 259.7 L409.6 260.4 L410.2 260.3 L410.8 260.5 L411.4 260.2 L412.0 260.8 L412.6 260.3 L413.2 260.0 L413.8 260.3 L414.4 260.5 L415.0 260.5 L415.6 259.9 L416.2 260.1 L416.8 260.0 L417.4 259.7 L418.0 260.1 L418.6 259.9 L419.2 260.5 L419.8 259.7 L420.4 260.0 L421.0 260.3 L421.6 260.1 L422.2 261.2 L422.8 260.4 L423.4 260.9 L424.0 259.9 L424.6 260.1 L425.2 260.0 L425.8 260.2 L426.4 260.1 L427.0 260.1 L427.6 260.2 L428.2 259.7 L428.8 259.9 L429.4 260.1 L430.0 260.0 L430.6 259.9 L431.2 260.2 L431.8 259.7 L432.4 260.4 L433.0 260.1 L433.6 260.3 L434.2 260.3 L434.8 259.6 L435.4 260.3 L436.0 260.2 L436.6 260.1 L437.2 260.3 L437.8 260.0 L438.4 260.1 L439.0 260.2 L439.6 260.1 L440.2 260.4 L440.8 260.0 L441.4 260.1 L442.0 260.0 L442.6 260.0 L443.2 259.9 L443.8 260.0 L444.4 260.0 L445.0 260.3 L445.6 260.0 L446.2 260.3 L446.8 260.3 L447.4 260.1 L448.0 260.3 L448.6 260.2 L449.2 260.2 L449.8 260.0 L450.4 260.2 L451.0 260.2 L451.6 259.8 L452.2 260.2 L452.8 260.4 L453.4 259.9 L454.0 259.9 L454.6 260.1 L455.2 260.3 L455.8 260.3 L456.4 260.1 L457.0 259.8 L457.6 260.0 L458.2 260.0 L458.8 260.4 L459.4 260.2 L460.0 259.9 L460.6 259.7 L461.2 260.2 L461.8 260.4 L462.4 260.0 L463.0 259.9 L463.6 260.3 L464.2 260.2 L464.8 259.8 L465.4 260.1 L466.0 259.8 L466.6 260.2 L467.2 260.1 L467.8 259.8 L468.4 260.3 L469.0 260.0 L469.6 260.3 L470.2 259.8 L470.8 259.7 L471.4 260.2 L472.0 259.9 L472.6 260.0 L473.2 260.2 L473.8 259.9 L474.4 260.0 L475.0 260.2 L475.6 260.5 L476.2 260.3 L476.8 260.4 L477.4 259.6 L478.0 260.1 L478.6 259.8 L479.2 260.0 L479.8 259.3 L480.4 259.9 L481.0 260.0 L481.6 259.9 L482.2 259.7 L482.8 260.5 L483.4 260.2 L484.0 260.2 L484.6 259.6 L485.2 259.8 L485.8 259.8 L486.4 260.2 L487.0 259.7 L487.6 260.0 L488.2 260.5 L488.8 260.0 L489.4 260.3 L490.0 259.8 L490.6 260.2 L491.2 259.9 L491.8 259.8 L492.4 260.0 L493.0 259.8 L493.6 259.8 L494.2 260.0 L494.8 260.0 L495.4 260.8 L496.0 259.9 L496.6 260.4 L497.2 260.1 L497.8 260.3 L498.4 259.9 L499.0 259.8 L499.6 259.9 L500.2 260.1 L500.8 260.1 L501.4 260.1 L502.0 260.2 L502.6 259.8 L503.2 260.4 L503.8 260.1 L504.4 260.0 L505.0 260.1 L505.6 260.3 L506.2 259.9 L506.8 260.0 L507.4 260.1 L508.0 260.3 L508.6 260.0 L509.2 260.5 L509.8 260.2 L510.4 260.4 L511.0 259.8 L511.6 260.3 L512.2 260.0 L512.8 259.8 L513.4 260.3 L514.0 260.2 L514.6 259.8 L515.2 260.1 L515.8 260.2 L516.4 260.0 L517.0 260.3 L517.6 259.9 L518.2 260.2 L518.8 260.1 L519.4 259.8 L520.0 260.4 L520.6 259.9 L521.2 259.9 L521.8 260.2 L522.4 260.1 L523.0 259.6 L523.6 260.2 L524.2 259.8 L524.8 260.3 L525.4 260.2 L526.0 260.5 L526.6 259.9 L527.2 260.1 L527.8 260.3 L528.4 259.8 L529.0 259.9 L529.6 259.9 L530.2 259.7 L530.8 260.0 L531.4 259.8 L532.0 260.2 L532.6 259.9 L533.2 260.1 L533.8 259.9 L534.4 260.3 L535.0 259.8 L535.6 260.2 L536.2 260.0 L536.8 260.2 L537.4 260.0 L538.0 260.2 L538.6 260.3 L539.2 259.7 L539.8 260.3 L540.4 260.1 L541.0 259.7 L541.6 260.2 L542.2 260.1 L542.8 259.8 L543.4 260.4 L544.0 260.3 L544.6 260.1 L545.2 260.0 L545.8 260.5 L546.4 259.9 L547.0 260.3 L547.6 259.7 L548.2 259.9 L548.8 260.4 L549.4 260.2 L550.0 260.2 L550.6 259.8 L551.2 260.1 L551.8 260.1 L552.4 260.5 L553.0 259.9 L553.6 259.8 L554.2 260.0 L554.8 260.1 L555.4 260.3 L556.0 259.9 L556.6 259.8 L557.2 259.8 L557.8 259.8 L558.4 260.1 L559.0 260.0 L559.6 259.9 L560.2 260.0 L560.8 260.3 L561.4 259.8 L562.0 259.9 L562.6 259.9 L563.2 260.1 L563.8 259.9 L564.4 259.7 L565.0 259.8 L565.6 260.0 L566.2 259.8 L566.8 260.4 L567.4 259.8 L568.0 260.3 L568.6 260.1 L569.2 260.3" fill="none" stroke="#900d10" stroke-width="1.55" stroke-linejoin="round"/>
<path d="M53.0 261.5 L53.8 261.4 L54.6 261.9 L55.4 262.1 L56.2 262.1 L57.0 262.4 L57.8 262.7 L58.6 263.0 L59.4 263.3 L60.2 263.9 L61.0 264.3 L61.8 265.0 L62.6 265.6 L63.4 266.5 L64.2 267.0 L65.0 267.8 L65.8 268.4 L66.6 268.9 L67.4 269.6 L68.2 269.7 L69.0 270.3 L69.8 270.6 L70.6 271.1 L71.4 271.2 L72.2 271.7 L73.0 272.0 L73.8 272.2 L74.6 272.7 L75.4 272.9 L76.2 273.1 L77.0 273.6 L77.8 273.5 L78.6 273.5 L79.4 273.8 L80.2 274.2 L81.0 274.3 L81.8 274.5 L82.6 274.7 L83.4 275.0 L84.2 274.9 L85.0 275.1 L85.8 275.0 L86.6 275.3 L87.4 275.5 L88.2 275.5 L89.0 275.1 L89.8 275.6 L90.6 275.8 L91.4 275.8 L92.2 275.5 L93.0 275.8 L93.8 276.0 L94.6 276.0 L95.4 275.9 L96.2 276.0 L97.0 276.4 L97.8 276.1 L98.6 276.6 L99.4 276.4 L100.2 276.6 L101.0 276.3 L101.8 276.5 L102.6 276.7 L103.4 276.5 L104.2 277.0 L105.0 276.5 L105.8 276.6 L106.6 276.9 L107.4 277.0 L108.2 277.0 L109.0 276.9 L109.8 277.0 L110.6 277.0 L111.4 277.0 L112.2 276.7 L113.0 277.3 L113.8 277.3 L114.6 277.3 L115.4 277.2 L116.2 277.3 L117.0 277.3 L117.8 277.3 L118.6 277.6 L119.4 277.1 L120.2 277.5 L121.0 277.3 L121.8 277.4 L122.6 277.8 L123.4 277.4 L124.2 277.6 L125.0 277.5 L125.8 277.8 L126.6 277.5 L127.4 277.4 L128.2 277.8 L129.0 277.7 L129.8 277.7 L130.6 278.0 L131.4 277.7 L132.2 277.8 L133.0 277.9 L133.8 278.0 L134.6 277.9 L135.4 278.1 L136.2 278.3 L137.0 278.0 L137.8 278.3 L138.6 277.7 L139.4 278.3 L140.2 278.1 L141.0 278.2 L141.8 278.1 L142.6 278.1 L143.4 278.0 L144.2 278.2 L145.0 278.4 L145.8 278.4 L146.6 278.2 L147.4 278.2 L148.2 278.2 L149.0 278.2 L149.8 278.6 L150.6 278.5 L151.4 278.4 L152.2 278.4 L153.0 278.3 L153.8 278.7 L154.6 278.6 L155.4 278.4 L156.2 278.7 L157.0 278.4 L157.8 278.7 L158.6 278.5 L159.4 278.6 L160.2 278.7 L161.0 278.7 L161.8 278.8 L162.6 278.6 L163.4 279.0 L164.2 279.0 L165.0 278.8 L165.8 278.9 L166.6 278.7 L167.4 278.8 L168.2 278.6 L169.0 278.9 L169.8 278.9 L170.6 279.1 L171.4 279.1 L172.2 279.1 L173.0 278.9 L173.8 278.9 L174.6 278.9 L175.4 279.0 L176.2 278.7 L177.0 279.1 L177.8 278.8 L178.6 278.9 L179.4 279.0 L180.2 279.0 L181.0 279.3 L181.8 279.0 L182.6 279.3 L183.4 279.3 L184.2 279.0 L185.0 279.2 L185.8 279.3 L186.6 279.1 L187.4 279.1 L188.2 279.1 L189.0 279.2 L189.8 279.1 L190.6 279.2 L191.4 279.3 L192.2 279.4 L193.0 279.2 L193.8 279.3 L194.6 279.4 L195.4 279.2 L196.2 279.1 L197.0 279.4 L197.8 279.1 L198.6 279.4 L199.4 279.2 L200.2 279.6 L201.0 279.1 L201.8 279.4 L202.6 279.5 L203.4 279.2 L204.2 279.5 L205.0 279.2 L205.8 279.0 L206.6 279.4 L207.4 279.4 L208.2 279.3 L209.0 278.9 L209.8 279.3 L210.6 279.3 L211.4 279.3 L212.2 279.3 L213.0 279.0 L213.8 279.2 L214.6 279.6 L215.4 279.6 L216.2 279.3 L217.0 279.2 L217.8 279.4 L218.6 279.5 L219.4 279.4 L220.2 279.1 L221.0 279.4 L221.8 279.4 L222.6 279.6 L223.4 279.5 L224.2 279.4 L225.0 279.5 L225.8 279.3 L226.6 279.6 L227.4 279.3 L228.2 279.4 L229.0 279.5 L229.8 279.2 L230.6 279.2 L231.4 279.1 L232.2 279.4 L233.0 279.3 L233.8 279.3 L234.6 279.4 L235.4 279.0 L236.2 279.3 L237.0 279.4 L237.8 279.3 L238.6 279.5 L239.4 279.6 L240.2 279.3 L241.0 279.2 L241.8 279.3 L242.6 279.4 L243.4 279.5 L244.2 279.2 L245.0 279.5 L245.8 279.2 L246.6 279.5 L247.4 279.4 L248.2 279.4 L249.0 279.7 L249.8 279.3 L250.6 279.3 L251.4 279.4 L252.2 279.5 L253.0 279.2 L253.8 279.4 L254.6 279.3 L255.4 279.5 L256.2 279.6 L257.0 279.4 L257.8 279.4 L258.6 279.4 L259.4 278.9 L260.2 279.5 L261.0 279.5 L261.8 279.4 L262.6 279.3 L263.4 279.3 L264.2 279.4 L265.0 279.6 L265.8 279.4 L266.6 279.6 L267.4 279.0 L268.2 279.3 L269.0 279.4 L269.8 279.4 L270.6 279.1 L271.4 279.3 L272.2 279.6 L273.0 279.2 L273.8 279.3 L274.6 279.2 L275.4 279.3 L276.2 279.5 L277.0 279.5 L277.8 279.1 L278.6 279.6 L279.4 279.3 L280.2 279.3 L281.0 279.7 L281.8 279.4 L282.6 279.2 L283.4 279.3 L284.2 279.3 L285.0 279.3 L285.8 279.4 L286.6 279.6 L287.4 279.5 L288.2 279.2 L289.0 279.9 L289.8 279.3 L290.6 279.4 L291.4 279.4 L292.2 279.5 L293.0 279.4 L293.8 279.5 L294.6 279.8 L295.4 279.5 L296.2 279.3 L297.0 279.5 L297.8 279.3 L298.6 279.4 L299.4 279.5 L300.2 279.5 L301.0 279.4 L301.8 279.6 L302.6 279.4 L303.4 279.2 L304.2 279.6 L305.0 279.4 L305.8 279.6 L306.6 279.4 L307.4 279.5 L308.2 279.5 L309.0 279.0 L309.8 279.2 L310.6 279.3 L311.4 279.7 L312.2 279.2 L313.0 279.6 L313.8 279.6 L314.6 279.5 L315.4 279.6 L316.2 279.4 L317.0 279.5 L317.8 279.5 L318.6 279.5 L319.4 279.6 L320.2 279.4 L321.0 279.4 L321.8 279.4 L322.6 279.5 L323.4 279.2 L324.2 279.3 L325.0 279.4 L325.8 279.4 L326.6 279.4 L327.4 279.1 L328.2 279.4 L329.0 279.4 L329.8 279.6 L330.6 279.2 L331.4 279.4 L332.2 279.6 L333.0 279.6 L333.8 279.7 L334.6 279.7 L335.4 279.3 L336.2 279.6 L337.0 279.4 L337.8 279.4 L338.6 279.7 L339.4 279.4 L340.2 279.4 L341.0 279.5 L341.8 279.4 L342.6 279.7 L343.4 279.6 L344.2 279.8 L345.0 279.7 L345.8 279.5 L346.6 279.8 L347.4 279.5 L348.2 279.6 L349.0 279.6 L349.8 279.7 L350.6 279.9 L351.4 279.6 L352.2 279.8 L353.0 279.7 L353.8 279.6 L354.6 279.6 L355.4 279.8 L356.2 279.9 L357.0 279.9 L357.8 279.9 L358.6 279.9 L359.4 279.8 L360.2 280.0 L361.0 279.7 L361.8 279.7 L362.6 279.8 L363.4 279.6 L364.2 279.7 L365.0 279.6 L365.8 279.6 L366.6 279.6 L367.4 279.5 L368.2 279.5 L369.0 279.2 L369.8 279.5 L370.6 279.3 L371.4 279.4 L372.2 278.9 L373.0 279.2 L373.8 279.3 L374.6 278.8 L375.4 279.1 L376.2 279.1 L377.0 279.0 L377.8 278.7 L378.6 278.9 L379.4 278.8 L380.2 278.5 L381.0 278.7 L381.8 278.5 L382.6 278.4 L383.4 278.3 L384.2 278.4 L385.0 278.2 L385.8 278.3 L386.6 278.1 L387.4 277.9 L388.2 277.8 L389.0 277.9 L389.8 277.7 L390.6 277.7 L391.4 277.6 L392.2 277.5 L393.0 277.2 L393.8 277.7 L394.6 277.8 L395.4 277.8 L396.2 277.8 L397.0 278.2 L397.8 278.0 L398.6 278.0 L399.4 278.1 L400.2 278.3 L401.0 278.2 L401.8 278.3 L402.6 278.8 L403.4 278.8 L404.2 278.8 L405.0 278.9 L405.8 278.9 L406.6 278.6 L407.4 279.1 L408.2 279.2 L409.0 279.2 L409.8 278.9 L410.6 279.4 L411.4 279.4 L412.2 279.2 L413.0 279.3 L413.8 279.4 L414.6 279.2 L415.4 279.4 L416.2 279.3 L417.0 279.4 L417.8 279.3 L418.6 279.1 L419.4 279.2 L420.2 279.8 L421.0 279.4 L421.8 279.6 L422.6 279.5 L423.4 279.6 L424.2 279.5 L425.0 279.3 L425.8 279.4 L426.6 279.1 L427.4 279.4 L428.2 279.6 L429.0 279.1 L429.8 279.5 L430.6 279.6 L431.4 279.7 L432.2 279.4 L433.0 279.4 L433.8 279.2 L434.6 279.4 L435.4 279.6 L436.2 279.9 L437.0 279.4 L437.8 279.8 L438.6 279.6 L439.4 279.5 L440.2 279.9 L441.0 279.2 L441.8 279.6 L442.6 279.6 L443.4 279.9 L444.2 279.9 L445.0 280.0 L445.8 279.6 L446.6 279.8 L447.4 279.8 L448.2 279.7 L449.0 279.7 L449.8 279.6 L450.6 279.6 L451.4 279.4 L452.2 279.9 L453.0 279.6 L453.8 279.3 L454.6 279.7 L455.4 279.6 L456.2 279.7 L457.0 279.9 L457.8 279.6 L458.6 279.6 L459.4 279.5 L460.2 279.6 L461.0 279.6 L461.8 279.7 L462.6 280.1 L463.4 279.7 L464.2 279.5 L465.0 279.9 L465.8 279.8 L466.6 279.8 L467.4 279.8 L468.2 279.8 L469.0 279.8 L469.8 279.9 L470.6 279.8 L471.4 279.9 L472.2 279.6 L473.0 279.7 L473.8 279.5 L474.6 279.8 L475.4 279.8 L476.2 279.6 L477.0 279.8 L477.8 280.1 L478.6 279.9 L479.4 279.5 L480.2 279.7 L481.0 279.8 L481.8 279.7 L482.6 279.7 L483.4 279.9 L484.2 279.7 L485.0 279.5 L485.8 279.8 L486.6 279.7 L487.4 279.7 L488.2 279.6 L489.0 279.5 L489.8 279.5 L490.6 279.6 L491.4 279.5 L492.2 279.3 L493.0 279.9 L493.8 279.5 L494.6 279.6 L495.4 279.8 L496.2 279.3 L497.0 279.9 L497.8 279.6 L498.6 279.8 L499.4 279.6 L500.2 279.8 L501.0 279.7 L501.8 279.7 L502.6 279.4 L503.4 279.5 L504.2 279.7 L505.0 279.9 L505.8 279.6 L506.6 279.8 L507.4 279.7 L508.2 279.8 L509.0 279.9 L509.8 279.5 L510.6 279.8 L511.4 279.7 L512.2 279.7 L513.0 279.6 L513.8 279.6 L514.6 279.6 L515.4 279.6 L516.2 280.1 L517.0 280.0 L517.8 279.7 L518.6 279.9 L519.4 279.6 L520.2 279.3 L521.0 279.5 L521.8 279.8 L522.6 280.0 L523.4 279.7 L524.2 279.6 L525.0 279.7 L525.8 279.6 L526.6 279.5 L527.4 279.7 L528.2 279.7 L529.0 279.6 L529.8 279.6 L530.6 279.6 L531.4 279.8 L532.2 280.0 L533.0 279.7 L533.8 280.1 L534.6 279.5 L535.4 279.8 L536.2 279.6 L537.0 279.8 L537.8 279.8 L538.6 279.9 L539.4 280.0 L540.2 279.7 L541.0 279.6 L541.8 279.8 L542.6 279.8 L543.4 279.7 L544.2 279.9 L545.0 280.1 L545.8 279.6 L546.6 279.9 L547.4 280.0 L548.2 279.5 L549.0 279.8 L549.8 279.8 L550.6 279.7 L551.4 280.2 L552.2 280.1 L553.0 280.1 L553.8 280.4 L554.6 280.5 L555.4 280.6 L556.2 280.7 L557.0 280.7 L557.8 280.4 L558.6 280.6 L559.4 280.7 L560.2 280.2 L561.0 281.0 L561.8 280.6 L562.6 280.5 L563.4 280.4 L564.2 280.8 L565.0 280.7 L565.8 280.7 L566.6 280.7 L567.4 280.6 L568.2 280.7 L569.0 280.8" fill="none" stroke="#db8cdc" stroke-width="1.55" stroke-linejoin="round"/>
<path d="M52.9 295 L52.9 222.5 L53.6 220.9 L54.6 222.2 L55.6 226.5 L56.4 228 L57.2 231 L57.9 233 L58.1 239.5 L59.3 240.6 L59.8 247.8 L56.4 247.8 L56.2 262 L55.2 280 L54.2 295 Z" fill="#0a7a14" stroke="#0a6a12" stroke-width="0.6"/>
<path d="M49 295.2 L53.4 295.2" stroke="#0a5a1e" stroke-width="1.4" fill="none"/>
<path d="M59.0 246.8 L59.6 249.4 L60.2 252.2 L60.8 254.4 L61.4 257.1 L62.0 259.0 L62.6 261.5 L63.2 262.8 L63.8 264.0 L64.4 265.3 L65.0 266.8 L65.6 267.5 L66.2 269.2 L66.8 269.3 L67.4 270.0 L68.0 270.5 L68.6 271.5 L69.2 272.6 L69.8 272.9 L70.4 274.3 L71.0 274.5 L71.6 273.9 L72.2 274.5 L72.8 275.2 L73.4 275.9 L74.0 275.7 L74.6 275.9 L75.2 276.8 L75.8 276.6 L76.4 276.6 L77.0 277.1 L77.6 277.0 L78.2 277.7 L78.8 277.9 L79.4 278.0 L80.0 278.1 L80.6 278.6 L81.2 278.4 L81.8 278.8 L82.4 278.5 L83.0 279.1 L83.6 278.5 L84.2 277.6 L84.8 279.0 L85.4 278.7 L86.0 278.8 L86.6 279.6 L87.2 278.9 L87.8 279.1 L88.4 279.4 L89.0 278.6 L89.6 279.8 L90.2 279.6 L90.8 279.0 L91.4 279.5 L92.0 279.8 L92.6 280.4 L93.2 279.5 L93.8 280.1 L94.4 279.6 L95.0 280.1 L95.6 279.7 L96.2 279.3 L96.8 280.3 L97.4 279.8 L98.0 279.6 L98.6 280.3 L99.2 280.6 L99.8 280.4 L100.4 279.6 L101.0 280.1 L101.6 280.2 L102.2 280.1 L102.8 280.9 L103.4 281.2 L104.0 281.1 L104.6 281.0 L105.2 280.5 L105.8 280.5 L106.4 280.9 L107.0 280.9 L107.6 281.1 L108.2 280.7 L108.8 280.8 L109.4 281.5 L110.0 280.8 L110.6 281.8 L111.2 281.5 L111.8 280.9 L112.4 281.7 L113.0 281.7 L113.6 281.7 L114.2 281.4 L114.8 281.4 L115.4 282.7 L116.0 281.1 L116.6 281.7 L117.2 282.1 L117.8 282.0 L118.4 281.9 L119.0 281.6 L119.6 281.8 L120.2 282.0 L120.8 282.9 L121.4 282.3 L122.0 282.3 L122.6 281.9 L123.2 283.1 L123.8 282.3 L124.4 282.9 L125.0 282.9 L125.6 283.2 L126.2 282.5 L126.8 282.7 L127.4 282.0 L128.0 282.7 L128.6 282.8 L129.2 282.6 L129.8 282.8 L130.4 283.1 L131.0 283.2 L131.6 283.5 L132.2 282.5 L132.8 283.8 L133.4 283.6 L134.0 283.1 L134.6 283.3 L135.2 282.9 L135.8 283.3 L136.4 283.2 L137.0 283.6 L137.6 283.8 L138.2 282.5 L138.8 283.5 L139.4 283.1 L140.0 283.5 L140.6 283.4 L141.2 283.4 L141.8 284.1 L142.4 284.3 L143.0 284.1 L143.6 284.1 L144.2 283.4 L144.8 283.2 L145.4 283.5 L146.0 283.9 L146.6 283.5 L147.2 283.0 L147.8 284.6 L148.4 284.1 L149.0 284.3 L149.6 285.0 L150.2 284.3 L150.8 284.6 L151.4 284.0 L152.0 285.3 L152.6 284.1 L153.2 284.6 L153.8 284.6 L154.4 284.1 L155.0 285.0 L155.6 284.1 L156.2 284.5 L156.8 284.8 L157.4 284.7 L158.0 284.5 L158.6 285.2 L159.2 284.4 L159.8 284.5 L160.4 284.6 L161.0 285.0 L161.6 284.6 L162.2 285.1 L162.8 284.9 L163.4 284.9 L164.0 285.6 L164.6 284.7 L165.2 285.1 L165.8 284.8 L166.4 284.5 L167.0 285.2 L167.6 284.6 L168.2 285.0 L168.8 285.2 L169.4 284.9 L170.0 285.6 L170.6 285.6 L171.2 285.8 L171.8 285.7 L172.4 285.0 L173.0 285.4 L173.6 285.6 L174.2 285.0 L174.8 285.3 L175.4 286.0 L176.0 285.5 L176.6 285.3 L177.2 285.6 L177.8 285.3 L178.4 285.3 L179.0 285.7 L179.6 285.8 L180.2 285.3 L180.8 284.5 L181.4 285.6 L182.0 285.1 L182.6 286.0 L183.2 286.4 L183.8 285.7 L184.4 286.0 L185.0 286.0 L185.6 285.4 L186.2 286.2 L186.8 285.4 L187.4 284.9 L188.0 286.1 L188.6 285.6 L189.2 285.6 L189.8 286.2 L190.4 285.7 L191.0 286.6 L191.6 286.2 L192.2 285.4 L192.8 286.2 L193.4 286.0 L194.0 285.9 L194.6 286.8 L195.2 285.8 L195.8 286.0 L196.4 286.0 L197.0 285.9 L197.6 285.9 L198.2 285.8 L198.8 286.1 L199.4 286.4 L200.0 285.7 L200.6 286.1 L201.2 285.7 L201.8 285.6 L202.4 285.9 L203.0 286.5 L203.6 286.6 L204.2 286.2 L204.8 286.0 L205.4 286.1 L206.0 286.6 L206.6 286.4 L207.2 286.6 L207.8 286.1 L208.4 286.6 L209.0 286.0 L209.6 286.5 L210.2 286.5 L210.8 287.1 L211.4 285.9 L212.0 285.8 L212.6 286.3 L213.2 285.9 L213.8 286.3 L214.4 286.1 L215.0 286.1 L215.6 286.3 L216.2 286.4 L216.8 286.3 L217.4 285.9 L218.0 287.1 L218.6 286.8 L219.2 286.6 L219.8 285.8 L220.4 286.7 L221.0 285.8 L221.6 285.7 L222.2 286.5 L222.8 286.1 L223.4 286.2 L224.0 286.7 L224.6 286.7 L225.2 287.1 L225.8 286.1 L226.4 285.8 L227.0 286.8 L227.6 286.6 L228.2 286.2 L228.8 286.1 L229.4 286.4 L230.0 287.2 L230.6 286.8 L231.2 286.9 L231.8 287.1 L232.4 286.1 L233.0 286.1 L233.6 285.9 L234.2 286.4 L234.8 286.1 L235.4 286.0 L236.0 286.2 L236.6 286.6 L237.2 286.7 L237.8 286.7 L238.4 286.3 L239.0 286.2 L239.6 286.5 L240.2 286.5 L240.8 286.2 L241.4 286.6 L242.0 286.5 L242.6 286.4 L243.2 286.4 L243.8 286.8 L244.4 287.3 L245.0 286.0 L245.6 286.7 L246.2 286.6 L246.8 287.1 L247.4 286.9 L248.0 286.3 L248.6 286.9 L249.2 287.5 L249.8 285.8 L250.4 286.2 L251.0 287.6 L251.6 287.0 L252.2 287.0 L252.8 286.4 L253.4 286.8 L254.0 286.7 L254.6 287.0 L255.2 286.5 L255.8 286.8 L256.4 286.7 L257.0 287.2 L257.6 286.8 L258.2 285.9 L258.8 286.8 L259.4 285.9 L260.0 286.4 L260.6 286.8 L261.2 287.1 L261.8 287.1 L262.4 286.8 L263.0 286.3 L263.6 287.4 L264.2 287.0 L264.8 286.9 L265.4 285.8 L266.0 287.0 L266.6 286.2 L267.2 286.9 L267.8 286.5 L268.4 286.7 L269.0 287.6 L269.6 287.0 L270.2 287.3 L270.8 286.8 L271.4 287.1 L272.0 286.0 L272.6 287.3 L273.2 287.6 L273.8 286.9 L274.4 287.6 L275.0 287.1 L275.6 286.7 L276.2 287.4 L276.8 286.8 L277.4 286.7 L278.0 286.8 L278.6 287.0 L279.2 287.1 L279.8 287.3 L280.4 286.8 L281.0 286.6 L281.6 287.3 L282.2 287.1 L282.8 286.9 L283.4 286.7 L284.0 286.8 L284.6 287.0 L285.2 287.2 L285.8 287.1 L286.4 286.5 L287.0 287.4 L287.6 287.0 L288.2 286.9 L288.8 287.0 L289.4 286.9 L290.0 287.2 L290.6 286.9 L291.2 286.5 L291.8 286.4 L292.4 287.6 L293.0 287.1 L293.6 287.0 L294.2 286.8 L294.8 286.9 L295.4 287.0 L296.0 287.1 L296.6 287.0 L297.2 287.2 L297.8 286.7 L298.4 287.1 L299.0 286.9 L299.6 286.3 L300.2 287.1 L300.8 287.0 L301.4 286.9 L302.0 287.1 L302.6 286.9 L303.2 287.2 L303.8 287.0 L304.4 287.2 L305.0 287.2 L305.6 287.0 L306.2 287.1 L306.8 286.9 L307.4 287.1 L308.0 287.1 L308.6 287.0 L309.2 286.7 L309.8 286.7 L310.4 287.4 L311.0 287.1 L311.6 286.5 L312.2 287.1 L312.8 287.1 L313.4 286.5 L314.0 287.5 L314.6 286.6 L315.2 287.4 L315.8 287.0 L316.4 287.4 L317.0 287.7 L317.6 287.1 L318.2 287.8 L318.8 286.2 L319.4 286.5 L320.0 287.3 L320.6 287.9 L321.2 287.3 L321.8 286.6 L322.4 287.0 L323.0 287.2 L323.6 287.0 L324.2 287.0 L324.8 287.5 L325.4 287.6 L326.0 287.6 L326.6 287.1 L327.2 287.4 L327.8 287.2 L328.4 287.3 L329.0 287.2 L329.6 287.5 L330.2 287.3 L330.8 287.1 L331.4 286.7 L332.0 287.3 L332.6 287.4 L333.2 287.2 L333.8 288.2 L334.4 287.0 L335.0 286.9 L335.6 287.3 L336.2 287.2 L336.8 287.5 L337.4 287.9 L338.0 287.2 L338.6 287.4 L339.2 287.5 L339.8 287.2 L340.4 287.0 L341.0 287.6 L341.6 287.0 L342.2 287.1 L342.8 287.5 L343.4 286.3 L344.0 288.1 L344.6 287.1 L345.2 287.0 L345.8 287.5 L346.4 287.5 L347.0 287.1 L347.6 287.0 L348.2 288.1 L348.8 287.5 L349.4 287.0 L350.0 287.8 L350.6 287.4 L351.2 287.7 L351.8 287.4 L352.4 288.0 L353.0 287.4 L353.6 287.1 L354.2 287.1 L354.8 287.6 L355.4 287.5 L356.0 287.3 L356.6 287.4 L357.2 287.5 L357.8 286.9 L358.4 287.5 L359.0 287.2 L359.6 287.4 L360.2 287.5 L360.8 287.5 L361.4 287.8 L362.0 287.2 L362.6 287.4 L363.2 286.9 L363.8 287.5 L364.4 287.3 L365.0 287.4 L365.6 287.6 L366.2 287.6 L366.8 287.5 L367.4 287.4 L368.0 287.3 L368.6 287.5 L369.2 287.9 L369.8 287.8 L370.4 286.9 L371.0 285.9 L371.6 287.5 L372.2 287.4 L372.8 287.8 L373.4 287.8 L374.0 287.9 L374.6 287.6 L375.2 287.1 L375.8 287.4 L376.4 287.7 L377.0 287.2 L377.6 287.2 L378.2 287.2 L378.8 287.5 L379.4 285.8 L380.0 287.0 L380.6 286.6 L381.2 287.0 L381.8 286.4 L382.4 286.6 L383.0 287.0 L383.6 286.0 L384.2 286.3 L384.8 285.9 L385.4 285.9 L386.0 286.1 L386.6 286.4 L387.2 285.8 L387.8 285.2 L388.4 285.5 L389.0 286.3 L389.6 286.1 L390.2 285.0 L390.8 285.3 L391.4 285.3 L392.0 285.4 L392.6 284.6 L393.2 285.7 L393.8 285.7 L394.4 285.4 L395.0 286.3 L395.6 285.7 L396.2 285.9 L396.8 285.9 L397.4 285.5 L398.0 286.0 L398.6 285.4 L399.2 285.9 L399.8 286.5 L400.4 286.8 L401.0 285.6 L401.6 286.5 L402.2 285.9 L402.8 286.3 L403.4 286.6 L404.0 286.3 L404.6 286.3 L405.2 286.0 L405.8 285.6 L406.4 286.7 L407.0 286.6 L407.6 286.6 L408.2 286.9 L408.8 287.3 L409.4 286.2 L410.0 287.5 L410.6 287.0 L411.2 286.7 L411.8 287.2 L412.4 287.2 L413.0 287.2 L413.6 287.1 L414.2 287.5 L414.8 287.3 L415.4 286.8 L416.0 287.6 L416.6 287.1 L417.2 287.2 L417.8 286.5 L418.4 287.8 L419.0 286.9 L419.6 286.8 L420.2 287.4 L420.8 287.8 L421.4 287.4 L422.0 286.8 L422.6 286.8 L423.2 286.7 L423.8 287.2 L424.4 287.5 L425.0 287.2 L425.6 287.6 L426.2 287.4 L426.8 287.3 L427.4 287.5 L428.0 287.3 L428.6 287.2 L429.2 287.7 L429.8 287.5 L430.4 287.5 L431.0 287.0 L431.6 287.0 L432.2 287.4 L432.8 287.1 L433.4 287.9 L434.0 287.3 L434.6 287.4 L435.2 287.2 L435.8 287.7 L436.4 286.9 L437.0 287.7 L437.6 288.1 L438.2 287.6 L438.8 287.7 L439.4 287.7 L440.0 287.8 L440.6 287.4 L441.2 287.4 L441.8 286.8 L442.4 287.6 L443.0 287.4 L443.6 287.5 L444.2 287.2 L444.8 287.4 L445.4 288.1 L446.0 287.8 L446.6 288.3 L447.2 288.3 L447.8 287.5 L448.4 287.7 L449.0 287.6 L449.6 288.1 L450.2 287.8 L450.8 288.0 L451.4 287.4 L452.0 287.3 L452.6 287.7 L453.2 287.1 L453.8 287.6 L454.4 287.4 L455.0 288.0 L455.6 287.8 L456.2 288.1 L456.8 287.8 L457.4 287.4 L458.0 288.2 L458.6 287.6 L459.2 287.2 L459.8 288.6 L460.4 287.7 L461.0 287.6 L461.6 287.6 L462.2 287.9 L462.8 287.4 L463.4 288.6 L464.0 288.4 L464.6 287.9 L465.2 287.7 L465.8 288.1 L466.4 288.2 L467.0 288.2 L467.6 288.4 L468.2 288.1 L468.8 288.1 L469.4 287.9 L470.0 288.5 L470.6 287.0 L471.2 288.1 L471.8 287.4 L472.4 288.0 L473.0 288.2 L473.6 288.8 L474.2 287.8 L474.8 288.2 L475.4 288.2 L476.0 287.9 L476.6 288.2 L477.2 288.5 L477.8 287.4 L478.4 288.3 L479.0 288.6 L479.6 288.0 L480.2 288.3 L480.8 287.9 L481.4 288.0 L482.0 288.4 L482.6 287.9 L483.2 288.2 L483.8 287.6 L484.4 288.4 L485.0 288.1 L485.6 288.9 L486.2 288.0 L486.8 287.5 L487.4 288.0 L488.0 287.9 L488.6 287.9 L489.2 288.1 L489.8 288.6 L490.4 287.6 L491.0 288.8 L491.6 288.0 L492.2 288.9 L492.8 288.5 L493.4 287.9 L494.0 288.8 L494.6 288.4 L495.2 288.6 L495.8 288.3 L496.4 288.4 L497.0 288.5 L497.6 288.4 L498.2 288.0 L498.8 288.5 L499.4 288.2 L500.0 288.9 L500.6 288.9 L501.2 288.1 L501.8 288.3 L502.4 288.4 L503.0 288.0 L503.6 288.4 L504.2 288.4 L504.8 288.3 L505.4 289.0 L506.0 288.4 L506.6 289.0 L507.2 288.6 L507.8 288.4 L508.4 288.6 L509.0 288.7 L509.6 288.3 L510.2 288.7 L510.8 288.4 L511.4 288.3 L512.0 288.8 L512.6 288.7 L513.2 289.0 L513.8 288.9 L514.4 289.1 L515.0 289.3 L515.6 289.4 L516.2 288.8 L516.8 288.5 L517.4 288.8 L518.0 288.0 L518.6 288.8 L519.2 288.9 L519.8 289.5 L520.4 288.3 L521.0 288.6 L521.6 288.8 L522.2 288.4 L522.8 289.1 L523.4 288.5 L524.0 289.1 L524.6 289.2 L525.2 288.9 L525.8 288.9 L526.4 289.2 L527.0 288.3 L527.6 288.5 L528.2 288.8 L528.8 288.4 L529.4 288.9 L530.0 289.6 L530.6 289.3 L531.2 288.8 L531.8 289.1 L532.4 288.5 L533.0 288.2 L533.6 288.1 L534.2 289.0 L534.8 289.3 L535.4 288.8 L536.0 288.8 L536.6 289.3 L537.2 289.2 L537.8 289.3 L538.4 289.5 L539.0 288.2 L539.6 289.2 L540.2 289.0 L540.8 289.0 L541.4 288.9 L542.0 288.3 L542.6 288.9 L543.2 289.3 L543.8 289.6 L544.4 289.1 L545.0 288.7 L545.6 288.7 L546.2 288.6 L546.8 289.1 L547.4 289.7 L548.0 289.4 L548.6 289.2 L549.2 289.4 L549.8 288.8 L550.4 289.7 L551.0 289.1 L551.6 289.8 L552.2 289.4 L552.8 289.6 L553.4 288.8 L554.0 289.9 L554.6 289.7 L555.2 289.1 L555.8 288.9 L556.4 289.6 L557.0 289.1 L557.6 289.6 L558.2 289.0 L558.8 289.2 L559.4 288.7 L560.0 289.4 L560.6 289.4 L561.2 289.3 L561.8 289.5 L562.4 289.2 L563.0 288.6 L563.6 289.5 L564.2 289.3 L564.8 289.6 L565.4 289.9 L566.0 290.0 L566.6 289.8 L567.2 289.5 L567.8 289.4 L568.4 290.0 L569.0 289.5" fill="none" stroke="#0b5a1c" stroke-width="1.55" stroke-linejoin="round"/>
<path d="M57.0 328.1 L57.6 326.3 L58.2 324.0 L58.8 321.6 L59.4 319.6 L60.0 317.2 L60.6 315.3 L61.2 313.0 L61.8 311.3 L62.4 310.0 L63.0 308.4 L63.6 307.3 L64.2 305.8 L64.8 304.2 L65.4 302.9 L66.0 301.8 L66.6 300.8 L67.2 299.9 L67.8 298.8 L68.4 298.0 L69.0 297.1 L69.6 296.7 L70.2 296.4 L70.8 295.9 L71.4 295.5 L72.0 294.8 L72.6 294.4 L73.2 294.6 L73.8 294.1 L74.4 293.9 L75.0 293.4 L75.6 293.9 L76.2 293.6 L76.8 292.9 L77.4 293.0 L78.0 292.9 L78.6 292.9 L79.2 292.9 L79.8 292.6 L80.4 292.4 L81.0 292.4 L81.6 291.9 L82.2 292.1 L82.8 292.1 L83.4 292.1 L84.0 291.8 L84.6 291.8 L85.2 291.6 L85.8 291.8 L86.4 291.5 L87.0 292.1 L87.6 291.5 L88.2 291.8 L88.8 291.4 L89.4 291.3 L90.0 291.5 L90.6 291.3 L91.2 291.7 L91.8 291.4 L92.4 290.9 L93.0 291.5 L93.6 290.7 L94.2 291.2 L94.8 291.1 L95.4 291.2 L96.0 291.1 L96.6 291.1 L97.2 291.1 L97.8 291.3 L98.4 291.0 L99.0 291.1 L99.6 291.6 L100.2 291.6 L100.8 291.4 L101.4 291.1 L102.0 291.0 L102.6 291.1 L103.2 290.8 L103.8 291.3 L104.4 290.9 L105.0 290.7 L105.6 291.3 L106.2 291.4 L106.8 291.2 L107.4 291.2 L108.0 291.1 L108.6 291.3 L109.2 291.3 L109.8 290.7 L110.4 291.1 L111.0 291.0 L111.6 291.3 L112.2 291.0 L112.8 290.9 L113.4 290.7 L114.0 291.0 L114.6 291.1 L115.2 291.3 L115.8 291.0 L116.4 291.2 L117.0 291.5 L117.6 290.8 L118.2 291.3 L118.8 291.1 L119.4 290.7 L120.0 290.9 L120.6 291.1 L121.2 290.9 L121.8 291.2 L122.4 290.9 L123.0 291.3 L123.6 291.0 L124.2 291.3 L124.8 291.3 L125.4 291.3 L126.0 291.3 L126.6 291.7 L127.2 291.3 L127.8 290.8 L128.4 291.0 L129.0 291.3 L129.6 291.3 L130.2 291.0 L130.8 291.2 L131.4 291.2 L132.0 291.1 L132.6 291.1 L133.2 291.2 L133.8 291.4 L134.4 290.8 L135.0 291.4 L135.6 291.2 L136.2 290.9 L136.8 291.2 L137.4 291.2 L138.0 291.0 L138.6 291.3 L139.2 291.1 L139.8 291.4 L140.4 291.5 L141.0 291.3 L141.6 291.3 L142.2 291.0 L142.8 291.2 L143.4 291.5 L144.0 291.6 L144.6 290.9 L145.2 291.3 L145.8 291.2 L146.4 291.7 L147.0 291.3 L147.6 291.7 L148.2 290.9 L148.8 290.9 L149.4 291.3 L150.0 291.0 L150.6 290.9 L151.2 291.2 L151.8 291.2 L152.4 291.3 L153.0 291.6 L153.6 291.1 L154.2 291.2 L154.8 291.0 L155.4 291.3 L156.0 291.5 L156.6 291.5 L157.2 290.9 L157.8 291.4 L158.4 291.3 L159.0 291.2 L159.6 291.1 L160.2 291.2 L160.8 291.4 L161.4 291.5 L162.0 291.5 L162.6 291.2 L163.2 291.4 L163.8 291.2 L164.4 291.6 L165.0 291.4 L165.6 291.1 L166.2 291.6 L166.8 291.7 L167.4 291.0 L168.0 291.8 L168.6 291.5 L169.2 291.4 L169.8 290.9 L170.4 291.1 L171.0 291.2 L171.6 291.6 L172.2 291.4 L172.8 291.5 L173.4 291.5 L174.0 291.5 L174.6 291.4 L175.2 291.7 L175.8 291.0 L176.4 291.3 L177.0 291.4 L177.6 291.3 L178.2 291.7 L178.8 291.4 L179.4 291.1 L180.0 291.4 L180.6 291.4 L181.2 291.3 L181.8 291.3 L182.4 291.4 L183.0 291.6 L183.6 291.5 L184.2 291.6 L184.8 291.5 L185.4 291.8 L186.0 291.5 L186.6 291.6 L187.2 291.7 L187.8 291.8 L188.4 291.8 L189.0 291.4 L189.6 291.3 L190.2 292.1 L190.8 291.3 L191.4 291.4 L192.0 291.3 L192.6 291.6 L193.2 291.6 L193.8 291.1 L194.4 291.8 L195.0 291.5 L195.6 291.8 L196.2 291.8 L196.8 291.6 L197.4 291.8 L198.0 291.4 L198.6 291.6 L199.2 291.6 L199.8 291.6 L200.4 291.7 L201.0 291.7 L201.6 291.5 L202.2 291.8 L202.8 291.5 L203.4 291.8 L204.0 291.5 L204.6 291.4 L205.2 292.1 L205.8 291.4 L206.4 291.8 L207.0 292.0 L207.6 291.8 L208.2 291.7 L208.8 291.6 L209.4 291.6 L210.0 291.5 L210.6 291.8 L211.2 291.8 L211.8 291.4 L212.4 291.2 L213.0 292.3 L213.6 291.6 L214.2 291.5 L214.8 291.5 L215.4 291.9 L216.0 292.0 L216.6 291.5 L217.2 291.6 L217.8 291.8 L218.4 291.6 L219.0 291.8 L219.6 291.8 L220.2 291.9 L220.8 291.9 L221.4 291.8 L222.0 291.6 L222.6 291.5 L223.2 291.7 L223.8 291.5 L224.4 291.7 L225.0 291.7 L225.6 291.7 L226.2 291.9 L226.8 291.8 L227.4 291.8 L228.0 292.1 L228.6 291.8 L229.2 292.1 L229.8 291.8 L230.4 291.9 L231.0 291.6 L231.6 291.8 L232.2 291.6 L232.8 292.1 L233.4 291.8 L234.0 292.1 L234.6 291.9 L235.2 291.6 L235.8 291.3 L236.4 291.8 L237.0 291.7 L237.6 291.7 L238.2 291.9 L238.8 291.8 L239.4 291.8 L240.0 291.9 L240.6 291.7 L241.2 291.7 L241.8 291.7 L242.4 292.0 L243.0 292.0 L243.6 291.8 L244.2 291.9 L244.8 292.0 L245.4 291.6 L246.0 292.2 L246.6 291.8 L247.2 291.6 L247.8 291.9 L248.4 291.9 L249.0 292.1 L249.6 292.1 L250.2 291.8 L250.8 291.8 L251.4 291.8 L252.0 291.8 L252.6 291.7 L253.2 291.9 L253.8 292.2 L254.4 292.1 L255.0 291.8 L255.6 291.7 L256.2 292.0 L256.8 292.2 L257.4 291.6 L258.0 292.0 L258.6 292.3 L259.2 292.2 L259.8 292.1 L260.4 291.9 L261.0 291.8 L261.6 292.0 L262.2 292.2 L262.8 292.1 L263.4 292.1 L264.0 291.9 L264.6 291.9 L265.2 292.2 L265.8 292.0 L266.4 292.2 L267.0 291.9 L267.6 291.8 L268.2 292.0 L268.8 292.0 L269.4 291.4 L270.0 291.8 L270.6 292.1 L271.2 291.9 L271.8 291.8 L272.4 292.0 L273.0 292.1 L273.6 292.3 L274.2 291.6 L274.8 292.0 L275.4 291.9 L276.0 292.5 L276.6 292.1 L277.2 291.8 L277.8 292.2 L278.4 292.2 L279.0 292.2 L279.6 292.2 L280.2 291.9 L280.8 291.8 L281.4 292.1 L282.0 292.0 L282.6 292.0 L283.2 291.7 L283.8 292.2 L284.4 292.2 L285.0 292.3 L285.6 292.1 L286.2 292.0 L286.8 291.9 L287.4 292.0 L288.0 291.9 L288.6 292.0 L289.2 291.9 L289.8 292.3 L290.4 292.1 L291.0 292.2 L291.6 292.1 L292.2 292.0 L292.8 291.7 L293.4 292.0 L294.0 292.0 L294.6 292.3 L295.2 291.9 L295.8 292.3 L296.4 292.2 L297.0 292.1 L297.6 292.1 L298.2 292.3 L298.8 292.2 L299.4 292.6 L300.0 291.7 L300.6 292.0 L301.2 292.5 L301.8 292.2 L302.4 291.8 L303.0 291.7 L303.6 291.9 L304.2 291.9 L304.8 291.8 L305.4 292.0 L306.0 292.1 L306.6 291.9 L307.2 292.1 L307.8 292.1 L308.4 292.3 L309.0 291.9 L309.6 292.2 L310.2 292.2 L310.8 292.3 L311.4 292.0 L312.0 292.2 L312.6 291.9 L313.2 292.3 L313.8 292.3 L314.4 292.4 L315.0 292.2 L315.6 292.6 L316.2 292.1 L316.8 291.9 L317.4 292.1 L318.0 292.2 L318.6 292.4 L319.2 292.1 L319.8 292.1 L320.4 292.4 L321.0 292.0 L321.6 292.4 L322.2 292.3 L322.8 292.0 L323.4 292.2 L324.0 292.1 L324.6 292.1 L325.2 292.3 L325.8 292.2 L326.4 292.5 L327.0 292.3 L327.6 292.0 L328.2 292.3 L328.8 292.4 L329.4 292.4 L330.0 292.0 L330.6 292.2 L331.2 292.0 L331.8 292.2 L332.4 292.2 L333.0 292.5 L333.6 292.4 L334.2 292.8 L334.8 292.4 L335.4 292.0 L336.0 292.3 L336.6 292.7 L337.2 292.3 L337.8 292.4 L338.4 292.5 L339.0 292.6 L339.6 292.6 L340.2 292.3 L340.8 292.1 L341.4 292.2 L342.0 292.5 L342.6 292.0 L343.2 292.4 L343.8 292.7 L344.4 292.1 L345.0 292.5 L345.6 292.2 L346.2 292.2 L346.8 292.5 L347.4 292.5 L348.0 292.4 L348.6 292.5 L349.2 292.5 L349.8 292.7 L350.4 292.2 L351.0 292.2 L351.6 292.7 L352.2 292.6 L352.8 292.3 L353.4 292.5 L354.0 292.7 L354.6 292.3 L355.2 292.5 L355.8 292.6 L356.4 292.3 L357.0 292.2 L357.6 292.5 L358.2 292.4 L358.8 292.4 L359.4 292.2 L360.0 292.5 L360.6 292.6 L361.2 292.4 L361.8 292.4 L362.4 292.2 L363.0 292.3 L363.6 292.1 L364.2 292.4 L364.8 292.4 L365.4 292.3 L366.0 292.1 L366.6 292.3 L367.2 292.5 L367.8 292.6 L368.4 292.0 L369.0 292.4 L369.6 292.6 L370.2 292.2 L370.8 292.3 L371.4 292.5 L372.0 292.4 L372.6 292.2 L373.2 292.2 L373.8 292.3 L374.4 292.4 L375.0 292.4 L375.6 292.5 L376.2 292.2 L376.8 292.5 L377.4 292.4 L378.0 292.3 L378.6 292.5 L379.2 292.3 L379.8 292.4 L380.4 292.2 L381.0 292.2 L381.6 292.2 L382.2 292.7 L382.8 292.4 L383.4 292.4 L384.0 292.2 L384.6 292.4 L385.2 292.1 L385.8 292.4 L386.4 292.3 L387.0 292.2 L387.6 292.4 L388.2 292.1 L388.8 292.1 L389.4 292.5 L390.0 292.1 L390.6 292.1 L391.2 292.6 L391.8 292.5 L392.4 292.4 L393.0 292.3 L393.6 292.1 L394.2 292.4 L394.8 292.3 L395.4 292.2 L396.0 292.4 L396.6 292.4 L397.2 292.3 L397.8 292.5 L398.4 292.4 L399.0 292.1 L399.6 292.4 L400.2 292.2 L400.8 292.6 L401.4 291.8 L402.0 292.3 L402.6 292.4 L403.2 292.5 L403.8 292.1 L404.4 292.3 L405.0 292.4 L405.6 292.2 L406.2 292.4 L406.8 292.2 L407.4 292.2 L408.0 292.5 L408.6 292.2 L409.2 292.2 L409.8 292.7 L410.4 292.6 L411.0 292.2 L411.6 292.4 L412.2 292.2 L412.8 292.1 L413.4 292.2 L414.0 292.5 L414.6 292.4 L415.2 292.1 L415.8 291.9 L416.4 292.5 L417.0 292.2 L417.6 292.5 L418.2 292.4 L418.8 292.5 L419.4 292.2 L420.0 292.1 L420.6 292.2 L421.2 292.4 L421.8 292.3 L422.4 292.1 L423.0 292.4 L423.6 292.1 L424.2 292.3 L424.8 292.2 L425.4 292.4 L426.0 292.8 L426.6 292.2 L427.2 292.0 L427.8 292.1 L428.4 292.3 L429.0 292.3 L429.6 292.4 L430.2 292.1 L430.8 292.0 L431.4 292.3 L432.0 292.6 L432.6 292.5 L433.2 292.5 L433.8 292.4 L434.4 292.5 L435.0 292.2 L435.6 292.5 L436.2 292.4 L436.8 292.4 L437.4 292.2 L438.0 292.2 L438.6 292.2 L439.2 292.5 L439.8 292.0 L440.4 292.2 L441.0 292.3 L441.6 292.0 L442.2 292.3 L442.8 292.5 L443.4 292.4 L444.0 292.0 L444.6 292.3 L445.2 292.1 L445.8 291.8 L446.4 292.4 L447.0 292.4 L447.6 292.0 L448.2 292.5 L448.8 292.4 L449.4 292.7 L450.0 292.3 L450.6 292.6 L451.2 292.2 L451.8 292.2 L452.4 292.6 L453.0 292.4 L453.6 292.6 L454.2 292.2 L454.8 292.2 L455.4 292.4 L456.0 292.1 L456.6 292.4 L457.2 292.0 L457.8 291.8 L458.4 292.2 L459.0 292.4 L459.6 292.6 L460.2 292.2 L460.8 292.3 L461.4 292.2 L462.0 292.3 L462.6 292.5 L463.2 292.3 L463.8 292.3 L464.4 292.3 L465.0 292.2 L465.6 292.4 L466.2 292.6 L466.8 292.0 L467.4 292.6 L468.0 291.8 L468.6 291.9 L469.2 292.3 L469.8 292.1 L470.4 292.7 L471.0 292.3 L471.6 291.9 L472.2 292.2 L472.8 292.3 L473.4 292.4 L474.0 292.1 L474.6 291.9 L475.2 291.9 L475.8 292.4 L476.4 292.4 L477.0 291.9 L477.6 292.3 L478.2 292.1 L478.8 292.2 L479.4 292.4 L480.0 292.2 L480.6 292.2 L481.2 291.8 L481.8 292.2 L482.4 292.5 L483.0 292.1 L483.6 292.3 L484.2 292.3 L484.8 292.7 L485.4 292.0 L486.0 292.3 L486.6 292.1 L487.2 292.2 L487.8 292.2 L488.4 291.8 L489.0 292.3 L489.6 292.0 L490.2 292.2 L490.8 292.3 L491.4 292.1 L492.0 291.9 L492.6 291.9 L493.2 292.3 L493.8 292.4 L494.4 292.5 L495.0 291.9 L495.6 292.2 L496.2 292.2 L496.8 292.0 L497.4 292.1 L498.0 291.9 L498.6 292.2 L499.2 292.0 L499.8 292.1 L500.4 292.4 L501.0 291.9 L501.6 292.1 L502.2 292.0 L502.8 292.0 L503.4 292.1 L504.0 292.1 L504.6 292.1 L505.2 291.9 L505.8 292.2 L506.4 291.9 L507.0 291.9 L507.6 291.9 L508.2 292.3 L508.8 292.3 L509.4 292.0 L510.0 292.5 L510.6 292.1 L511.2 291.8 L511.8 292.1 L512.4 291.9 L513.0 291.8 L513.6 291.6 L514.2 292.1 L514.8 292.1 L515.4 291.8 L516.0 292.2 L516.6 292.1 L517.2 292.1 L517.8 292.2 L518.4 291.9 L519.0 292.1 L519.6 292.1 L520.2 291.9 L520.8 292.0 L521.4 291.8 L522.0 292.1 L522.6 291.8 L523.2 292.1 L523.8 292.0 L524.4 292.0 L525.0 292.1 L525.6 291.9 L526.2 292.3 L526.8 292.1 L527.4 291.8 L528.0 291.9 L528.6 292.1 L529.2 292.3 L529.8 291.9 L530.4 292.3 L531.0 292.0 L531.6 292.2 L532.2 291.9 L532.8 291.8 L533.4 291.9 L534.0 292.0 L534.6 291.8 L535.2 291.7 L535.8 292.1 L536.4 292.2 L537.0 291.9 L537.6 291.9 L538.2 292.2 L538.8 291.6 L539.4 292.1 L540.0 292.0 L540.6 292.1 L541.2 292.0 L541.8 292.1 L542.4 292.0 L543.0 291.9 L543.6 292.1 L544.2 291.7 L544.8 292.0 L545.4 292.0 L546.0 291.6 L546.6 292.0 L547.2 292.0 L547.8 292.1 L548.4 291.9 L549.0 292.1 L549.6 292.1 L550.2 292.0 L550.8 291.2 L551.4 291.9 L552.0 291.9 L552.6 291.9 L553.2 291.7 L553.8 292.1 L554.4 291.8 L555.0 291.8 L555.6 291.9 L556.2 292.1 L556.8 291.8 L557.4 291.7 L558.0 291.9 L558.6 291.9 L559.2 291.5 L559.8 291.7 L560.4 291.9 L561.0 291.5 L561.6 292.1 L562.2 291.6 L562.8 292.0 L563.4 291.6 L564.0 291.7 L564.6 291.7 L565.2 291.8 L565.8 291.4 L566.4 291.7 L567.0 292.0 L567.6 291.9 L568.2 292.2 L568.8 291.4 L569.4 292.1" fill="none" stroke="#08084e" stroke-width="1.35" stroke-linejoin="round"/>
<path d="M53 294 L54.2 294 L56 303 L57.8 311 L59.2 318 L58 331 L55.5 338 L53 331 Z" fill="#000"/>
<path d="M55.8 322 L58.4 318.5 L58 327 L56.6 338 L55 342.2 L52.6 340.5 L53.6 331 Z" fill="#1a1aa0" stroke="#10107a" stroke-width="0.6"/>
<path d="M49 340.8 L53.5 340.8" stroke="#000" stroke-width="1.3" fill="none"/>
<path d="M57.0 307.7 L57.6 311.6 L58.2 314.3 L58.8 316.8 L59.4 318.4 L60.0 322.0 L60.6 321.3 L61.2 322.6 L61.8 323.5 L62.4 324.2 L63.0 324.2 L63.6 325.0 L64.2 325.0 L64.8 325.4 L65.4 325.2 L66.0 325.4 L66.6 325.9 L67.2 325.6 L67.8 325.9 L68.4 325.8 L69.0 326.1 L69.6 325.8 L70.2 325.7 L70.8 326.8 L71.4 325.6 L72.0 326.3 L72.6 326.2 L73.2 326.0 L73.8 325.6 L74.4 326.5 L75.0 326.5 L75.6 325.6 L76.2 326.4 L76.8 326.2 L77.4 326.1 L78.0 328.3 L78.6 326.1 L79.2 326.9 L79.8 327.2 L80.4 326.3 L81.0 326.5 L81.6 326.6 L82.2 329.1 L82.8 326.2 L83.4 326.1 L84.0 325.8 L84.6 326.6 L85.2 325.9 L85.8 326.1 L86.4 326.5 L87.0 326.1 L87.6 326.5 L88.2 326.1 L88.8 326.1 L89.4 326.2 L90.0 326.3 L90.6 326.2 L91.2 326.0 L91.8 326.1 L92.4 326.9 L93.0 326.4 L93.6 326.1 L94.2 326.5 L94.8 327.1 L95.4 326.1 L96.0 326.2 L96.6 326.2 L97.2 326.6 L97.8 326.2 L98.4 326.1 L99.0 325.8 L99.6 327.6 L100.2 326.8 L100.8 326.0 L101.4 326.3 L102.0 326.0 L102.6 326.0 L103.2 326.4 L103.8 326.8 L104.4 326.5 L105.0 326.2 L105.6 326.1 L106.2 325.7 L106.8 326.3 L107.4 326.0 L108.0 326.1 L108.6 326.4 L109.2 326.4 L109.8 325.8 L110.4 326.0 L111.0 326.1 L111.6 326.4 L112.2 326.5 L112.8 325.9 L113.4 326.6 L114.0 326.1 L114.6 326.1 L115.2 326.6 L115.8 327.2 L116.4 326.0 L117.0 326.2 L117.6 326.1 L118.2 325.9 L118.8 326.1 L119.4 325.5 L120.0 326.6 L120.6 326.1 L121.2 326.0 L121.8 326.0 L122.4 325.7 L123.0 325.9 L123.6 326.0 L124.2 326.0 L124.8 325.7 L125.4 325.6 L126.0 325.7 L126.6 325.8 L127.2 326.6 L127.8 325.8 L128.4 326.4 L129.0 325.7 L129.6 325.5 L130.2 325.6 L130.8 326.1 L131.4 325.7 L132.0 325.7 L132.6 326.1 L133.2 325.9 L133.8 325.7 L134.4 326.5 L135.0 326.1 L135.6 325.6 L136.2 326.0 L136.8 327.6 L137.4 326.0 L138.0 325.5 L138.6 326.2 L139.2 326.0 L139.8 326.2 L140.4 325.8 L141.0 325.7 L141.6 326.1 L142.2 326.3 L142.8 326.0 L143.4 326.1 L144.0 325.6 L144.6 326.6 L145.2 325.8 L145.8 327.4 L146.4 325.8 L147.0 325.8 L147.6 326.0 L148.2 325.8 L148.8 325.8 L149.4 326.5 L150.0 326.2 L150.6 325.6 L151.2 326.1 L151.8 325.4 L152.4 325.7 L153.0 326.0 L153.6 325.7 L154.2 326.1 L154.8 326.1 L155.4 327.5 L156.0 325.9 L156.6 326.2 L157.2 325.8 L157.8 325.4 L158.4 327.1 L159.0 326.4 L159.6 325.8 L160.2 325.9 L160.8 325.6 L161.4 325.7 L162.0 325.5 L162.6 325.2 L163.2 325.5 L163.8 325.8 L164.4 326.1 L165.0 325.8 L165.6 325.6 L166.2 325.8 L166.8 325.8 L167.4 325.9 L168.0 325.7 L168.6 326.2 L169.2 325.7 L169.8 325.9 L170.4 325.6 L171.0 325.4 L171.6 325.6 L172.2 325.7 L172.8 325.9 L173.4 326.3 L174.0 326.3 L174.6 325.7 L175.2 325.8 L175.8 325.3 L176.4 325.9 L177.0 325.7 L177.6 325.6 L178.2 326.1 L178.8 325.5 L179.4 325.6 L180.0 326.0 L180.6 326.1 L181.2 325.6 L181.8 325.3 L182.4 325.7 L183.0 325.4 L183.6 325.7 L184.2 325.4 L184.8 325.8 L185.4 325.8 L186.0 326.0 L186.6 325.8 L187.2 325.8 L187.8 325.7 L188.4 326.3 L189.0 325.5 L189.6 325.8 L190.2 325.7 L190.8 325.3 L191.4 325.5 L192.0 325.8 L192.6 325.7 L193.2 325.8 L193.8 325.4 L194.4 325.4 L195.0 325.9 L195.6 325.5 L196.2 325.6 L196.8 325.8 L197.4 325.6 L198.0 325.4 L198.6 325.3 L199.2 325.6 L199.8 325.5 L200.4 325.7 L201.0 325.9 L201.6 325.4 L202.2 325.5 L202.8 325.8 L203.4 326.0 L204.0 325.2 L204.6 325.9 L205.2 326.0 L205.8 327.2 L206.4 325.8 L207.0 325.1 L207.6 325.6 L208.2 325.9 L208.8 325.7 L209.4 327.0 L210.0 325.5 L210.6 325.2 L211.2 325.7 L211.8 325.3 L212.4 327.3 L213.0 325.4 L213.6 325.7 L214.2 325.4 L214.8 325.8 L215.4 326.0 L216.0 325.3 L216.6 325.5 L217.2 324.8 L217.8 325.7 L218.4 325.6 L219.0 325.5 L219.6 325.6 L220.2 325.3 L220.8 325.5 L221.4 325.8 L222.0 325.6 L222.6 325.8 L223.2 327.2 L223.8 325.3 L224.4 326.2 L225.0 325.4 L225.6 325.0 L226.2 325.4 L226.8 325.6 L227.4 325.0 L228.0 325.5 L228.6 325.1 L229.2 325.2 L229.8 325.6 L230.4 326.0 L231.0 325.3 L231.6 325.3 L232.2 325.4 L232.8 325.3 L233.4 325.4 L234.0 324.9 L234.6 325.3 L235.2 325.1 L235.8 325.4 L236.4 325.0 L237.0 327.8 L237.6 325.4 L238.2 325.3 L238.8 325.3 L239.4 325.1 L240.0 324.9 L240.6 325.3 L241.2 325.1 L241.8 325.5 L242.4 325.3 L243.0 325.1 L243.6 325.1 L244.2 325.4 L244.8 325.6 L245.4 325.3 L246.0 325.5 L246.6 325.0 L247.2 325.6 L247.8 325.2 L248.4 325.1 L249.0 325.4 L249.6 325.4 L250.2 325.7 L250.8 324.8 L251.4 325.1 L252.0 324.9 L252.6 325.3 L253.2 325.2 L253.8 325.3 L254.4 326.1 L255.0 326.0 L255.6 325.1 L256.2 325.4 L256.8 325.4 L257.4 325.2 L258.0 325.5 L258.6 324.7 L259.2 325.1 L259.8 325.6 L260.4 324.9 L261.0 325.1 L261.6 325.3 L262.2 325.6 L262.8 325.8 L263.4 325.0 L264.0 325.3 L264.6 324.9 L265.2 325.3 L265.8 325.5 L266.4 327.5 L267.0 325.1 L267.6 325.3 L268.2 325.3 L268.8 325.5 L269.4 325.2 L270.0 325.0 L270.6 324.5 L271.2 325.2 L271.8 325.3 L272.4 325.0 L273.0 325.2 L273.6 325.4 L274.2 325.3 L274.8 324.7 L275.4 325.6 L276.0 325.5 L276.6 325.0 L277.2 324.8 L277.8 325.1 L278.4 325.0 L279.0 325.2 L279.6 324.8 L280.2 325.0 L280.8 326.5 L281.4 324.7 L282.0 325.7 L282.6 325.6 L283.2 324.6 L283.8 325.6 L284.4 325.1 L285.0 326.2 L285.6 325.8 L286.2 325.6 L286.8 325.6 L287.4 325.3 L288.0 325.4 L288.6 325.2 L289.2 325.6 L289.8 325.0 L290.4 325.5 L291.0 325.4 L291.6 325.4 L292.2 325.1 L292.8 325.2 L293.4 325.2 L294.0 325.2 L294.6 324.8 L295.2 324.6 L295.8 325.0 L296.4 324.6 L297.0 324.9 L297.6 325.2 L298.2 325.0 L298.8 324.9 L299.4 325.0 L300.0 325.2 L300.6 324.6 L301.2 324.8 L301.8 325.3 L302.4 324.5 L303.0 324.7 L303.6 325.1 L304.2 324.5 L304.8 324.9 L305.4 325.0 L306.0 324.6 L306.6 324.5 L307.2 325.2 L307.8 324.7 L308.4 324.4 L309.0 324.9 L309.6 324.6 L310.2 325.0 L310.8 324.7 L311.4 325.0 L312.0 325.1 L312.6 324.8 L313.2 324.6 L313.8 325.5 L314.4 325.3 L315.0 324.4 L315.6 324.8 L316.2 324.9 L316.8 324.8 L317.4 325.0 L318.0 324.6 L318.6 324.9 L319.2 325.1 L319.8 324.4 L320.4 325.2 L321.0 324.8 L321.6 326.1 L322.2 324.9 L322.8 324.4 L323.4 325.1 L324.0 324.6 L324.6 324.6 L325.2 324.9 L325.8 324.9 L326.4 324.9 L327.0 324.6 L327.6 325.0 L328.2 324.7 L328.8 324.5 L329.4 324.6 L330.0 325.0 L330.6 324.5 L331.2 325.8 L331.8 325.0 L332.4 324.6 L333.0 325.1 L333.6 324.7 L334.2 325.1 L334.8 324.8 L335.4 324.9 L336.0 324.8 L336.6 324.8 L337.2 324.6 L337.8 324.9 L338.4 324.4 L339.0 324.7 L339.6 324.1 L340.2 324.9 L340.8 324.3 L341.4 324.6 L342.0 325.0 L342.6 325.1 L343.2 324.3 L343.8 324.7 L344.4 324.4 L345.0 325.4 L345.6 324.4 L346.2 324.8 L346.8 324.4 L347.4 324.5 L348.0 324.6 L348.6 324.8 L349.2 324.4 L349.8 324.1 L350.4 324.8 L351.0 324.6 L351.6 324.7 L352.2 324.3 L352.8 325.0 L353.4 325.7 L354.0 324.6 L354.6 324.9 L355.2 324.8 L355.8 324.5 L356.4 324.7 L357.0 324.9 L357.6 324.5 L358.2 324.5 L358.8 325.7 L359.4 324.4 L360.0 324.0 L360.6 324.8 L361.2 324.3 L361.8 324.3 L362.4 324.6 L363.0 324.4 L363.6 324.2 L364.2 324.5 L364.8 325.8 L365.4 324.5 L366.0 324.5 L366.6 324.1 L367.2 324.2 L367.8 324.7 L368.4 324.2 L369.0 324.6 L369.6 324.2 L370.2 324.4 L370.8 324.6 L371.4 324.6 L372.0 324.6 L372.6 325.6 L373.2 324.2 L373.8 325.0 L374.4 324.5 L375.0 324.1 L375.6 324.6 L376.2 324.6 L376.8 324.3 L377.4 324.7 L378.0 324.3 L378.6 324.0 L379.2 324.4 L379.8 324.5 L380.4 324.2 L381.0 324.6 L381.6 323.9 L382.2 324.5 L382.8 324.0 L383.4 324.4 L384.0 324.3 L384.6 324.1 L385.2 324.1 L385.8 324.3 L386.4 325.7 L387.0 328.2 L387.6 324.5 L388.2 324.1 L388.8 325.1 L389.4 324.5 L390.0 324.3 L390.6 324.0 L391.2 324.0 L391.8 324.4 L392.4 324.3 L393.0 324.5 L393.6 324.6 L394.2 323.8 L394.8 324.2 L395.4 324.1 L396.0 324.3 L396.6 324.2 L397.2 324.1 L397.8 324.4 L398.4 324.1 L399.0 324.0 L399.6 324.4 L400.2 324.3 L400.8 324.3 L401.4 323.8 L402.0 324.3 L402.6 324.2 L403.2 323.8 L403.8 324.2 L404.4 325.4 L405.0 324.2 L405.6 324.2 L406.2 324.3 L406.8 324.0 L407.4 324.1 L408.0 323.8 L408.6 324.8 L409.2 324.3 L409.8 324.1 L410.4 324.4 L411.0 324.4 L411.6 324.4 L412.2 324.2 L412.8 324.3 L413.4 324.1 L414.0 324.6 L414.6 324.1 L415.2 324.6 L415.8 323.9 L416.4 326.3 L417.0 324.3 L417.6 324.5 L418.2 323.8 L418.8 324.0 L419.4 324.2 L420.0 324.4 L420.6 324.0 L421.2 324.3 L421.8 324.3 L422.4 323.9 L423.0 324.1 L423.6 324.3 L424.2 324.2 L424.8 324.0 L425.4 324.7 L426.0 324.1 L426.6 324.4 L427.2 324.1 L427.8 324.7 L428.4 324.2 L429.0 323.9 L429.6 324.4 L430.2 324.2 L430.8 327.1 L431.4 324.4 L432.0 323.9 L432.6 324.3 L433.2 324.0 L433.8 324.4 L434.4 323.8 L435.0 324.9 L435.6 324.5 L436.2 324.2 L436.8 323.4 L437.4 324.0 L438.0 324.4 L438.6 323.8 L439.2 323.6 L439.8 324.1 L440.4 325.8 L441.0 323.9 L441.6 324.3 L442.2 323.9 L442.8 324.6 L443.4 324.4 L444.0 324.2 L444.6 324.2 L445.2 323.5 L445.8 324.4 L446.4 324.0 L447.0 324.3 L447.6 324.0 L448.2 324.3 L448.8 323.9 L449.4 323.9 L450.0 324.2 L450.6 323.9 L451.2 324.1 L451.8 324.2 L452.4 324.0 L453.0 323.8 L453.6 323.4 L454.2 324.1 L454.8 323.8 L455.4 323.7 L456.0 323.9 L456.6 323.6 L457.2 323.7 L457.8 323.7 L458.4 323.4 L459.0 323.7 L459.6 323.8 L460.2 324.1 L460.8 323.9 L461.4 324.3 L462.0 324.1 L462.6 323.8 L463.2 324.0 L463.8 324.7 L464.4 324.2 L465.0 323.5 L465.6 323.8 L466.2 323.9 L466.8 324.2 L467.4 323.9 L468.0 324.0 L468.6 323.6 L469.2 323.6 L469.8 323.6 L470.4 324.0 L471.0 323.8 L471.6 323.8 L472.2 323.8 L472.8 323.9 L473.4 323.7 L474.0 323.5 L474.6 323.8 L475.2 324.3 L475.8 323.5 L476.4 323.8 L477.0 323.8 L477.6 323.6 L478.2 323.6 L478.8 323.7 L479.4 323.8 L480.0 324.4 L480.6 324.1 L481.2 324.0 L481.8 323.8 L482.4 323.9 L483.0 323.3 L483.6 323.9 L484.2 323.8 L484.8 323.6 L485.4 323.7 L486.0 323.7 L486.6 323.7 L487.2 323.8 L487.8 323.3 L488.4 323.8 L489.0 323.1 L489.6 323.5 L490.2 327.0 L490.8 323.6 L491.4 323.8 L492.0 323.6 L492.6 323.4 L493.2 323.3 L493.8 323.9 L494.4 323.5 L495.0 324.1 L495.6 324.5 L496.2 323.9 L496.8 324.3 L497.4 323.3 L498.0 323.8 L498.6 324.1 L499.2 323.7 L499.8 324.0 L500.4 324.0 L501.0 324.1 L501.6 323.7 L502.2 324.4 L502.8 323.9 L503.4 323.9 L504.0 323.4 L504.6 325.1 L505.2 324.1 L505.8 323.6 L506.4 323.7 L507.0 324.1 L507.6 323.6 L508.2 324.2 L508.8 323.6 L509.4 323.8 L510.0 324.5 L510.6 323.8 L511.2 323.6 L511.8 324.1 L512.4 323.7 L513.0 324.0 L513.6 323.2 L514.2 323.6 L514.8 323.3 L515.4 323.3 L516.0 323.9 L516.6 323.8 L517.2 323.2 L517.8 323.4 L518.4 323.7 L519.0 324.0 L519.6 323.1 L520.2 323.9 L520.8 323.4 L521.4 323.3 L522.0 323.6 L522.6 323.3 L523.2 323.3 L523.8 323.2 L524.4 323.5 L525.0 323.3 L525.6 324.3 L526.2 323.2 L526.8 324.3 L527.4 323.8 L528.0 323.6 L528.6 323.5 L529.2 323.9 L529.8 323.7 L530.4 323.2 L531.0 323.4 L531.6 323.2 L532.2 323.6 L532.8 323.5 L533.4 323.1 L534.0 324.1 L534.6 323.3 L535.2 323.2 L535.8 323.3 L536.4 323.5 L537.0 323.8 L537.6 323.3 L538.2 323.0 L538.8 323.5 L539.4 323.2 L540.0 323.7 L540.6 325.1 L541.2 323.4 L541.8 324.7 L542.4 323.5 L543.0 323.6 L543.6 323.1 L544.2 327.0 L544.8 323.1 L545.4 323.2 L546.0 323.5 L546.6 323.4 L547.2 323.3 L547.8 323.2 L548.4 323.5 L549.0 323.0 L549.6 323.5 L550.2 322.9 L550.8 324.8 L551.4 323.2 L552.0 323.7 L552.6 323.5 L553.2 323.2 L553.8 323.9 L554.4 323.4 L555.0 323.2 L555.6 323.4 L556.2 323.3 L556.8 323.5 L557.4 323.4 L558.0 323.3 L558.6 323.1 L559.2 323.4 L559.8 323.0 L560.4 323.3 L561.0 325.0 L561.6 323.7 L562.2 323.3 L562.8 323.1 L563.4 323.4 L564.0 323.4 L564.6 322.9 L565.2 323.2 L565.8 323.2 L566.4 323.2 L567.0 323.2 L567.6 323.4 L568.2 322.9 L568.8 323.3 L569.4 323.0" fill="none" stroke="#000" stroke-width="1.60" stroke-linejoin="round"/>
<rect x="312.8" y="345.4" width="1.4" height="1.4" fill="#8a8a8a"/>
<rect x="476.4" y="345.4" width="1.4" height="1.4" fill="#8a8a8a"/>
<rect x="537.0" y="345.6" width="1.4" height="1.4" fill="#8a8a8a"/>
<g stroke="#000" stroke-width="1.2" fill="none"><line x1="48.55" y1="149.5" x2="48.55" y2="355.90" stroke-width="1.3"/><line x1="48" y1="355.30" x2="598.5" y2="355.30" stroke-width="1.15"/><line x1="46.6" y1="336.60" x2="50.6" y2="336.60"/><line x1="46.6" y1="321.50" x2="50.6" y2="321.50"/><line x1="46.6" y1="306.40" x2="50.6" y2="306.40"/><line x1="46.6" y1="291.30" x2="50.6" y2="291.30"/><line x1="46.6" y1="276.20" x2="50.6" y2="276.20"/><line x1="46.6" y1="261.10" x2="50.6" y2="261.10"/><line x1="46.6" y1="246.00" x2="50.6" y2="246.00"/><line x1="46.6" y1="230.90" x2="50.6" y2="230.90"/><line x1="46.6" y1="215.80" x2="50.6" y2="215.80"/><line x1="46.6" y1="200.70" x2="50.6" y2="200.70"/><line x1="46.6" y1="185.60" x2="50.6" y2="185.60"/><line x1="46.6" y1="170.50" x2="50.6" y2="170.50"/><line x1="46.6" y1="155.40" x2="50.6" y2="155.40"/><line x1="57.5" y1="352.8" x2="57.5" y2="357.2"/><line x1="90.5" y1="352.8" x2="90.5" y2="357.2"/><line x1="123.5" y1="352.8" x2="123.5" y2="357.2"/><line x1="156.5" y1="352.8" x2="156.5" y2="357.2"/><line x1="189.5" y1="352.8" x2="189.5" y2="357.2"/><line x1="222.5" y1="352.8" x2="222.5" y2="357.2"/><line x1="255.5" y1="352.8" x2="255.5" y2="357.2"/><line x1="288.5" y1="352.8" x2="288.5" y2="357.2"/><line x1="321.5" y1="352.8" x2="321.5" y2="357.2"/><line x1="354.5" y1="352.8" x2="354.5" y2="357.2"/><line x1="387.5" y1="352.8" x2="387.5" y2="357.2"/><line x1="420.5" y1="352.8" x2="420.5" y2="357.2"/><line x1="453.5" y1="352.8" x2="453.5" y2="357.2"/><line x1="486.5" y1="352.8" x2="486.5" y2="357.2"/><line x1="519.5" y1="352.8" x2="519.5" y2="357.2"/><line x1="552.5" y1="352.8" x2="552.5" y2="357.2"/><line x1="585.5" y1="352.8" x2="585.5" y2="357.2"/></g>
<line x1="634" y1="178.40" x2="665.2" y2="178.40" stroke="#7fe0e6" stroke-width="1.5"/>
<line x1="634" y1="188.56" x2="665.2" y2="188.56" stroke="#d67bd6" stroke-width="1.3"/>
<line x1="634" y1="198.72" x2="665.2" y2="198.72" stroke="#b77f80" stroke-width="1.5"/>
<line x1="634" y1="208.88" x2="665.2" y2="208.88" stroke="#8a0a0a" stroke-width="1.7"/>
<line x1="634" y1="219.04" x2="665.2" y2="219.04" stroke="#86008a" stroke-width="2.0"/>
<line x1="634" y1="229.20" x2="665.2" y2="229.20" stroke="#08085a" stroke-width="1.7"/>
<line x1="634" y1="239.36" x2="665.2" y2="239.36" stroke="#4a0a86" stroke-width="1.5"/>
<line x1="634" y1="249.52" x2="665.2" y2="249.52" stroke="#0a3a12" stroke-width="1.5"/>
<line x1="634" y1="259.68" x2="665.2" y2="259.68" stroke="#b8860b" stroke-width="1.5"/>
<line x1="634" y1="269.84" x2="665.2" y2="269.84" stroke="#000" stroke-width="1.5"/>
</svg>
<div id="txt">
<span id="tt0" class="t" style="left:15.18px;top:-0.90px;height:17.60px;line-height:17.60px;font-size:8.80px;font-weight:bold;color:#fff;letter-spacing:0.000px;transform:scaleX(0.9498);transform-origin:0 50%;">DEMOMODE</span>
<span id="tt1" class="t" style="left:67.38px;top:-0.90px;height:17.60px;line-height:17.60px;font-size:8.80px;font-weight:bold;color:#fff;letter-spacing:0.000px;transform:scaleX(0.8760);transform-origin:0 50%;">C:</span>
<span id="tt2" class="t" style="left:80.18px;top:-0.90px;height:17.60px;line-height:17.60px;font-size:8.80px;font-weight:bold;color:#fff;letter-spacing:0.146px;">office</span>
<span id="tt3" class="t" style="left:108.68px;top:-0.90px;height:17.60px;line-height:17.60px;font-size:8.80px;font-weight:bold;color:#fff;letter-spacing:0.000px;transform:scaleX(1.1520);transform-origin:0 50%;">data</span>
<span id="tt4" class="t" style="left:133.88px;top:-0.90px;height:17.60px;line-height:17.60px;font-size:8.80px;font-weight:bold;color:#fff;letter-spacing:0.000px;transform:scaleX(1.0563);transform-origin:0 50%;">cooltool</span>
<span id="tt5" class="t" style="left:173.88px;top:-0.90px;height:17.60px;line-height:17.60px;font-size:8.80px;font-weight:bold;color:#fff;letter-spacing:0.000px;transform:scaleX(1.0757);transform-origin:0 50%;">articles</span>
<span id="tt6" class="t" style="left:210.88px;top:-0.90px;height:17.60px;line-height:17.60px;font-size:8.80px;font-weight:bold;color:#fff;letter-spacing:0.145px;">IKKE_Splitklima</span>
<span id="tt7" class="t" style="left:284.38px;top:-0.90px;height:17.60px;line-height:17.60px;font-size:8.80px;font-weight:bold;color:#fff;letter-spacing:0.078px;">ClimaCheck</span>
<span id="tt8" class="t" style="left:339.88px;top:-0.90px;height:17.60px;line-height:17.60px;font-size:8.80px;font-weight:bold;color:#fff;letter-spacing:0.185px;">einhell03.ccw</span>
<span id="tt9" class="t" style="left:402.78px;top:-0.90px;height:17.60px;line-height:17.60px;font-size:8.80px;font-weight:bold;color:#fff;letter-spacing:0.000px;transform:scaleX(1.0710);transform-origin:0 50%;">|</span>
<span id="tt10" class="t" style="left:408.88px;top:-0.90px;height:17.60px;line-height:17.60px;font-size:8.80px;font-weight:bold;color:#fff;letter-spacing:0.000px;transform:scaleX(0.9298);transform-origin:0 50%;">C:</span>
<span id="tt11" class="t" style="left:421.38px;top:-0.90px;height:17.60px;line-height:17.60px;font-size:8.80px;font-weight:bold;color:#fff;letter-spacing:0.000px;transform:scaleX(1.0768);transform-origin:0 50%;">Programme</span>
<span id="tt12" class="t" style="left:478.38px;top:-0.90px;height:17.60px;line-height:17.60px;font-size:8.80px;font-weight:bold;color:#fff;letter-spacing:0.028px;">ClimaCheck</span>
<span id="tt13" class="t" style="left:533.88px;top:-0.90px;height:17.60px;line-height:17.60px;font-size:8.80px;font-weight:bold;color:#fff;letter-spacing:0.213px;">DataSources</span>
<span id="tt14" class="t" style="left:594.48px;top:-0.90px;height:17.60px;line-height:17.60px;font-size:8.80px;font-weight:bold;color:#fff;letter-spacing:0.231px;">PA8_7_1_Comp.ccd</span>
<span id="m1" class="t" style="left:3.88px;top:14.00px;height:17.80px;line-height:17.80px;font-size:8.90px;font-weight:normal;color:#000;letter-spacing:-0.164px;-webkit-text-stroke:0.22px #000;">File</span>
<span id="m2" class="t" style="left:25.88px;top:14.00px;height:17.80px;line-height:17.80px;font-size:8.90px;font-weight:normal;color:#000;letter-spacing:-0.105px;-webkit-text-stroke:0.22px #000;">View</span>
<span id="m3" class="t" style="left:51.88px;top:14.00px;height:17.80px;line-height:17.80px;font-size:8.90px;font-weight:normal;color:#000;letter-spacing:-0.023px;-webkit-text-stroke:0.22px #000;">Refrigerant</span>
<span id="m4" class="t" style="left:104.38px;top:14.00px;height:17.80px;line-height:17.80px;font-size:8.90px;font-weight:normal;color:#000;letter-spacing:-0.144px;-webkit-text-stroke:0.22px #000;">Scan</span>
<span id="m5" class="t" style="left:131.88px;top:14.00px;height:17.80px;line-height:17.80px;font-size:8.90px;font-weight:normal;color:#000;letter-spacing:-0.053px;-webkit-text-stroke:0.22px #000;">Settings</span>
<span id="m6" class="t" style="left:171.38px;top:14.00px;height:17.80px;line-height:17.80px;font-size:8.90px;font-weight:normal;color:#85837d;letter-spacing:0.009px;text-shadow:0.75px 0.75px 0 #f4f2ee;">Contact</span>
<span id="m7" class="t" style="left:210.38px;top:14.00px;height:17.80px;line-height:17.80px;font-size:8.90px;font-weight:normal;color:#85837d;letter-spacing:-0.133px;text-shadow:0.75px 0.75px 0 #f4f2ee;">Performance Analyser</span>
<span id="m8" class="t" style="left:302.88px;top:14.00px;height:17.80px;line-height:17.80px;font-size:8.90px;font-weight:normal;color:#000;letter-spacing:-0.152px;-webkit-text-stroke:0.22px #000;">Help</span>
<span id="b_contact" class="t" style="left:48.55px;top:47.80px;height:15.60px;line-height:15.60px;font-size:7.80px;font-weight:normal;color:#716f69;letter-spacing:0.000px;transform:scaleX(0.9233);transform-origin:0 50%;text-shadow:0.8px 0.8px 0 #fff;">Contact</span>
<span id="scan" class="t" style="left:94.10px;top:32.30px;height:20.00px;line-height:20.00px;font-size:10.00px;font-weight:normal;color:#6e0808;letter-spacing:0.000px;transform:scaleX(0.8369);transform-origin:0 50%;">Scanning</span>
<span id="b_start1" class="t" style="left:103.24px;top:47.30px;height:16.00px;line-height:16.00px;font-size:8.00px;font-weight:bold;color:#000;letter-spacing:0.000px;transform:scaleX(0.8358);transform-origin:0 50%;">Start</span>
<span id="c6s" class="t" style="left:142.72px;top:34.60px;height:13.60px;line-height:13.60px;font-size:6.80px;font-weight:normal;color:#111;letter-spacing:0.000px;transform:scaleX(0.8685);transform-origin:0 50%;-webkit-text-stroke:0.2px #111;">6 s</span>
<span id="zero" class="t" style="left:155.52px;top:54.10px;height:13.60px;line-height:13.60px;font-size:6.80px;font-weight:normal;color:#111;letter-spacing:0.000px;transform:scaleX(1.2652);transform-origin:0 50%;-webkit-text-stroke:0.2px #111;">0</span>
<span id="logg" class="t" style="left:195.70px;top:32.30px;height:20.00px;line-height:20.00px;font-size:10.00px;font-weight:normal;color:#6e0808;letter-spacing:0.000px;transform:scaleX(0.8737);transform-origin:0 50%;">Logging</span>
<span id="b_start2" class="t" style="left:203.85px;top:47.80px;height:15.60px;line-height:15.60px;font-size:7.80px;font-weight:normal;color:#716f69;letter-spacing:0.000px;transform:scaleX(0.8388);transform-origin:0 50%;text-shadow:0.8px 0.8px 0 #fff;">Start</span>
<span id="b_clean" class="t" style="left:246.54px;top:31.40px;height:16.00px;line-height:16.00px;font-size:8.00px;font-weight:bold;color:#000;letter-spacing:0.000px;transform:scaleX(0.8626);transform-origin:0 50%;">Clean up</span>
<span id="b_reload" class="t" style="left:243.54px;top:47.30px;height:16.00px;line-height:16.00px;font-size:8.00px;font-weight:bold;color:#000;letter-spacing:0.000px;transform:scaleX(0.8545);transform-origin:0 50%;">Reload Inp</span>
<span id="b_export" class="t" style="left:300.84px;top:31.40px;height:16.00px;line-height:16.00px;font-size:8.00px;font-weight:bold;color:#000;letter-spacing:0.000px;transform:scaleX(0.8105);transform-origin:0 50%;">Export</span>
<span id="l_refr" class="t" style="left:343.97px;top:31.80px;height:18.00px;line-height:18.00px;font-size:9.00px;font-weight:normal;color:#000;letter-spacing:0.000px;transform:scaleX(0.9179);transform-origin:0 50%;-webkit-text-stroke:0.15px #000;">Refrigerant:</span>
<span id="l_dst" class="t" style="left:321.77px;top:47.00px;height:18.00px;line-height:18.00px;font-size:9.00px;font-weight:normal;color:#000;letter-spacing:0.000px;transform:scaleX(0.9399);transform-origin:0 50%;-webkit-text-stroke:0.15px #000;">DataSourceType:</span>
<span id="v_r407" class="t" style="left:390.83px;top:32.40px;height:19.20px;line-height:19.20px;font-size:9.60px;font-weight:normal;color:#000;letter-spacing:0.155px;-webkit-text-stroke:0.3px #000;">R407C</span>
<span id="v_cc" class="t" style="left:390.83px;top:48.40px;height:19.20px;line-height:19.20px;font-size:9.60px;font-weight:normal;color:#000;letter-spacing:0.000px;transform:scaleX(0.8620);transform-origin:0 50%;-webkit-text-stroke:0.3px #000;">CC -</span>
<span id="l_exp" class="t" style="left:457.37px;top:31.80px;height:18.00px;line-height:18.00px;font-size:9.00px;font-weight:normal;color:#000;letter-spacing:0.000px;transform:scaleX(0.9286);transform-origin:0 50%;-webkit-text-stroke:0.15px #000;">Exportname sheet/file:</span>
<span id="l_next" class="t" style="left:644.37px;top:47.00px;height:18.00px;line-height:18.00px;font-size:9.00px;font-weight:normal;color:#000;letter-spacing:-0.169px;-webkit-text-stroke:0.15px #000;">Next AutoSave in:</span>
<span id="v_off" class="t" style="left:718.27px;top:49.00px;height:18.00px;line-height:18.00px;font-size:9.00px;font-weight:normal;color:#000;letter-spacing:0.000px;transform:scaleX(1.0839);transform-origin:0 50%;-webkit-text-stroke:0.3px #000;">off</span>
<span id="ctitle" class="t" style="left:210.59px;top:102.10px;height:23.00px;line-height:23.00px;font-size:11.50px;font-weight:normal;color:#0a0a0a;letter-spacing:0.000px;transform:scaleX(1.0717);transform-origin:0 50%;-webkit-text-stroke:0.62px #0a0a0a;">Selected Data Stability</span>
<span id="ctitle2" class="t" style="left:341.19px;top:102.10px;height:23.00px;line-height:23.00px;font-size:11.50px;font-weight:normal;color:#0a0a0a;letter-spacing:-0.086px;-webkit-text-stroke:0.62px #0a0a0a;">18.02.2008 09:27:22</span>
<span id="b_setup" class="t" style="left:723.15px;top:102.10px;height:18.60px;line-height:18.60px;font-size:9.30px;font-weight:normal;color:#000;letter-spacing:0.000px;transform:scaleX(0.9286);transform-origin:0 50%;-webkit-text-stroke:0.3px #000;">Data Setup</span>
<span id="y80" class="t" style="left:35.53px;top:161.10px;height:19.20px;line-height:19.20px;font-size:9.60px;font-weight:normal;color:#000;letter-spacing:-0.062px;-webkit-text-stroke:0.15px #000;">80</span>
<span id="y60" class="t" style="left:35.53px;top:191.30px;height:19.20px;line-height:19.20px;font-size:9.60px;font-weight:normal;color:#000;letter-spacing:-0.062px;-webkit-text-stroke:0.15px #000;">60</span>
<span id="y40" class="t" style="left:35.53px;top:221.50px;height:19.20px;line-height:19.20px;font-size:9.60px;font-weight:normal;color:#000;letter-spacing:-0.062px;-webkit-text-stroke:0.15px #000;">40</span>
<span id="y20" class="t" style="left:35.53px;top:251.70px;height:19.20px;line-height:19.20px;font-size:9.60px;font-weight:normal;color:#000;letter-spacing:-0.062px;-webkit-text-stroke:0.15px #000;">20</span>
<span id="y0" class="t" style="left:40.23px;top:281.90px;height:19.20px;line-height:19.20px;font-size:9.60px;font-weight:normal;color:#000;letter-spacing:0.000px;transform:scaleX(1.0944);transform-origin:0 50%;-webkit-text-stroke:0.15px #000;">0</span>
<span id="y-20" class="t" style="left:32.63px;top:312.10px;height:19.20px;line-height:19.20px;font-size:9.60px;font-weight:normal;color:#000;letter-spacing:-0.142px;-webkit-text-stroke:0.15px #000;">-20</span>
<span id="y-40" class="t" style="left:32.63px;top:344.60px;height:19.20px;line-height:19.20px;font-size:9.60px;font-weight:normal;color:#000;letter-spacing:-0.142px;-webkit-text-stroke:0.15px #000;">-40</span>
<span id="x0" class="t" style="left:46.13px;top:356.40px;height:19.20px;line-height:19.20px;font-size:9.60px;font-weight:normal;color:#000;letter-spacing:0.000px;transform:scaleX(0.9347);transform-origin:0 50%;-webkit-text-stroke:0.15px #000;">10:20</span>
<span id="x1" class="t" style="left:79.13px;top:356.40px;height:19.20px;line-height:19.20px;font-size:9.60px;font-weight:normal;color:#000;letter-spacing:0.000px;transform:scaleX(0.9347);transform-origin:0 50%;-webkit-text-stroke:0.15px #000;">10:30</span>
<span id="x2" class="t" style="left:112.13px;top:356.40px;height:19.20px;line-height:19.20px;font-size:9.60px;font-weight:normal;color:#000;letter-spacing:0.000px;transform:scaleX(0.9347);transform-origin:0 50%;-webkit-text-stroke:0.15px #000;">10:40</span>
<span id="x3" class="t" style="left:145.13px;top:356.40px;height:19.20px;line-height:19.20px;font-size:9.60px;font-weight:normal;color:#000;letter-spacing:0.000px;transform:scaleX(0.9347);transform-origin:0 50%;-webkit-text-stroke:0.15px #000;">10:50</span>
<span id="x4" class="t" style="left:178.13px;top:356.40px;height:19.20px;line-height:19.20px;font-size:9.60px;font-weight:normal;color:#000;letter-spacing:-0.170px;-webkit-text-stroke:0.15px #000;">11:00</span>
<span id="x5" class="t" style="left:211.13px;top:356.40px;height:19.20px;line-height:19.20px;font-size:9.60px;font-weight:normal;color:#000;letter-spacing:-0.170px;-webkit-text-stroke:0.15px #000;">11:10</span>
<span id="x6" class="t" style="left:244.13px;top:356.40px;height:19.20px;line-height:19.20px;font-size:9.60px;font-weight:normal;color:#000;letter-spacing:-0.170px;-webkit-text-stroke:0.15px #000;">11:20</span>
<span id="x7" class="t" style="left:277.13px;top:356.40px;height:19.20px;line-height:19.20px;font-size:9.60px;font-weight:normal;color:#000;letter-spacing:-0.170px;-webkit-text-stroke:0.15px #000;">11:30</span>
<span id="x8" class="t" style="left:310.13px;top:356.40px;height:19.20px;line-height:19.20px;font-size:9.60px;font-weight:normal;color:#000;letter-spacing:-0.170px;-webkit-text-stroke:0.15px #000;">11:40</span>
<span id="x9" class="t" style="left:343.13px;top:356.40px;height:19.20px;line-height:19.20px;font-size:9.60px;font-weight:normal;color:#000;letter-spacing:-0.170px;-webkit-text-stroke:0.15px #000;">11:50</span>
<span id="x10" class="t" style="left:376.13px;top:356.40px;height:19.20px;line-height:19.20px;font-size:9.60px;font-weight:normal;color:#000;letter-spacing:0.000px;transform:scaleX(0.9347);transform-origin:0 50%;-webkit-text-stroke:0.15px #000;">12:00</span>
<span id="x11" class="t" style="left:409.13px;top:356.40px;height:19.20px;line-height:19.20px;font-size:9.60px;font-weight:normal;color:#000;letter-spacing:0.000px;transform:scaleX(0.9347);transform-origin:0 50%;-webkit-text-stroke:0.15px #000;">12:10</span>
<span id="x12" class="t" style="left:442.13px;top:356.40px;height:19.20px;line-height:19.20px;font-size:9.60px;font-weight:normal;color:#000;letter-spacing:0.000px;transform:scaleX(0.9347);transform-origin:0 50%;-webkit-text-stroke:0.15px #000;">12:20</span>
<span id="x13" class="t" style="left:475.13px;top:356.40px;height:19.20px;line-height:19.20px;font-size:9.60px;font-weight:normal;color:#000;letter-spacing:0.000px;transform:scaleX(0.9347);transform-origin:0 50%;-webkit-text-stroke:0.15px #000;">12:30</span>
<span id="x14" class="t" style="left:508.13px;top:356.40px;height:19.20px;line-height:19.20px;font-size:9.60px;font-weight:normal;color:#000;letter-spacing:0.000px;transform:scaleX(0.9347);transform-origin:0 50%;-webkit-text-stroke:0.15px #000;">12:40</span>
<span id="x15" class="t" style="left:541.13px;top:356.40px;height:19.20px;line-height:19.20px;font-size:9.60px;font-weight:normal;color:#000;letter-spacing:0.000px;transform:scaleX(0.9347);transform-origin:0 50%;-webkit-text-stroke:0.15px #000;">12:50</span>
<span id="x16" class="t" style="left:574.13px;top:356.40px;height:19.20px;line-height:19.20px;font-size:9.60px;font-weight:normal;color:#000;letter-spacing:0.000px;transform:scaleX(0.9347);transform-origin:0 50%;-webkit-text-stroke:0.15px #000;">13:00</span>
<span id="lg0" class="t" style="left:674.98px;top:170.90px;height:17.60px;line-height:17.60px;font-size:8.80px;font-weight:normal;color:#000;letter-spacing:-0.146px;-webkit-text-stroke:0.3px #000;">SecC Evap in</span>
<span id="lu0" class="t" style="left:735.38px;top:170.90px;height:17.60px;line-height:17.60px;font-size:8.80px;font-weight:normal;color:#000;letter-spacing:0.000px;transform:scaleX(0.9243);transform-origin:0 50%;-webkit-text-stroke:0.3px #000;">(°C)</span>
<span id="lg1" class="t" style="left:674.98px;top:181.06px;height:17.60px;line-height:17.60px;font-size:8.80px;font-weight:normal;color:#000;letter-spacing:-0.149px;-webkit-text-stroke:0.3px #000;">SecC Evap out</span>
<span id="lu1" class="t" style="left:741.38px;top:181.06px;height:17.60px;line-height:17.60px;font-size:8.80px;font-weight:normal;color:#000;letter-spacing:0.000px;transform:scaleX(0.9243);transform-origin:0 50%;-webkit-text-stroke:0.3px #000;">(°C)</span>
<span id="lg2" class="t" style="left:674.98px;top:191.22px;height:17.60px;line-height:17.60px;font-size:8.80px;font-weight:normal;color:#000;letter-spacing:-0.141px;-webkit-text-stroke:0.3px #000;">SecW Cond in</span>
<span id="lu2" class="t" style="left:735.98px;top:191.22px;height:17.60px;line-height:17.60px;font-size:8.80px;font-weight:normal;color:#000;letter-spacing:0.000px;transform:scaleX(0.9243);transform-origin:0 50%;-webkit-text-stroke:0.3px #000;">(°C)</span>
<span id="lg3" class="t" style="left:674.98px;top:201.38px;height:17.60px;line-height:17.60px;font-size:8.80px;font-weight:normal;color:#000;letter-spacing:-0.137px;-webkit-text-stroke:0.3px #000;">SecW  Cond out</span>
<span id="lu3" class="t" style="left:749.38px;top:201.38px;height:17.60px;line-height:17.60px;font-size:8.80px;font-weight:normal;color:#000;letter-spacing:0.000px;transform:scaleX(0.9243);transform-origin:0 50%;-webkit-text-stroke:0.3px #000;">(°C)</span>
<span id="lg4" class="t" style="left:674.98px;top:211.54px;height:17.60px;line-height:17.60px;font-size:8.80px;font-weight:normal;color:#000;letter-spacing:-0.165px;-webkit-text-stroke:0.3px #000;">Ref Cond Mid point</span>
<span id="lu4" class="t" style="left:756.38px;top:211.54px;height:17.60px;line-height:17.60px;font-size:8.80px;font-weight:normal;color:#000;letter-spacing:0.000px;transform:scaleX(0.9116);transform-origin:0 50%;-webkit-text-stroke:0.3px #000;">(°C)</span>
<span id="lg5" class="t" style="left:674.98px;top:221.70px;height:17.60px;line-height:17.60px;font-size:8.80px;font-weight:normal;color:#000;letter-spacing:-0.079px;-webkit-text-stroke:0.3px #000;">Ref Evap Midpoint</span>
<span id="lu5" class="t" style="left:753.78px;top:221.70px;height:17.60px;line-height:17.60px;font-size:8.80px;font-weight:normal;color:#000;letter-spacing:0.000px;transform:scaleX(0.9116);transform-origin:0 50%;-webkit-text-stroke:0.3px #000;">(°C)</span>
<span id="lg6" class="t" style="left:674.98px;top:231.86px;height:17.60px;line-height:17.60px;font-size:8.80px;font-weight:normal;color:#000;letter-spacing:-0.211px;-webkit-text-stroke:0.3px #000;">Ref Comp out</span>
<span id="lu6" class="t" style="left:737.58px;top:231.86px;height:17.60px;line-height:17.60px;font-size:8.80px;font-weight:normal;color:#000;letter-spacing:0.000px;transform:scaleX(0.9243);transform-origin:0 50%;-webkit-text-stroke:0.3px #000;">(°C)</span>
<span id="lg7" class="t" style="left:674.98px;top:242.02px;height:17.60px;line-height:17.60px;font-size:8.80px;font-weight:normal;color:#000;letter-spacing:-0.170px;-webkit-text-stroke:0.3px #000;">Super heat</span>
<span id="lu7" class="t" style="left:724.98px;top:242.02px;height:17.60px;line-height:17.60px;font-size:8.80px;font-weight:normal;color:#000;letter-spacing:0.000px;transform:scaleX(0.9497);transform-origin:0 50%;-webkit-text-stroke:0.3px #000;">(K)</span>
<span id="lg8" class="t" style="left:674.98px;top:252.18px;height:17.60px;line-height:17.60px;font-size:8.80px;font-weight:normal;color:#000;letter-spacing:-0.112px;-webkit-text-stroke:0.3px #000;">Sub cool total</span>
<span id="lu8" class="t" style="left:740.38px;top:252.18px;height:17.60px;line-height:17.60px;font-size:8.80px;font-weight:normal;color:#000;letter-spacing:0.000px;transform:scaleX(0.9497);transform-origin:0 50%;-webkit-text-stroke:0.3px #000;">(K)</span>
<span id="lg9" class="t" style="left:674.98px;top:262.34px;height:17.60px;line-height:17.60px;font-size:8.80px;font-weight:normal;color:#000;letter-spacing:0.000px;transform:scaleX(0.9239);transform-origin:0 50%;-webkit-text-stroke:0.3px #000;">Comp Isen. eff**</span>
<span id="lu9" class="t" style="left:735.78px;top:262.34px;height:17.60px;line-height:17.60px;font-size:8.80px;font-weight:normal;color:#000;letter-spacing:-0.181px;-webkit-text-stroke:0.3px #000;">(%)</span>
</div>
</body></html>
